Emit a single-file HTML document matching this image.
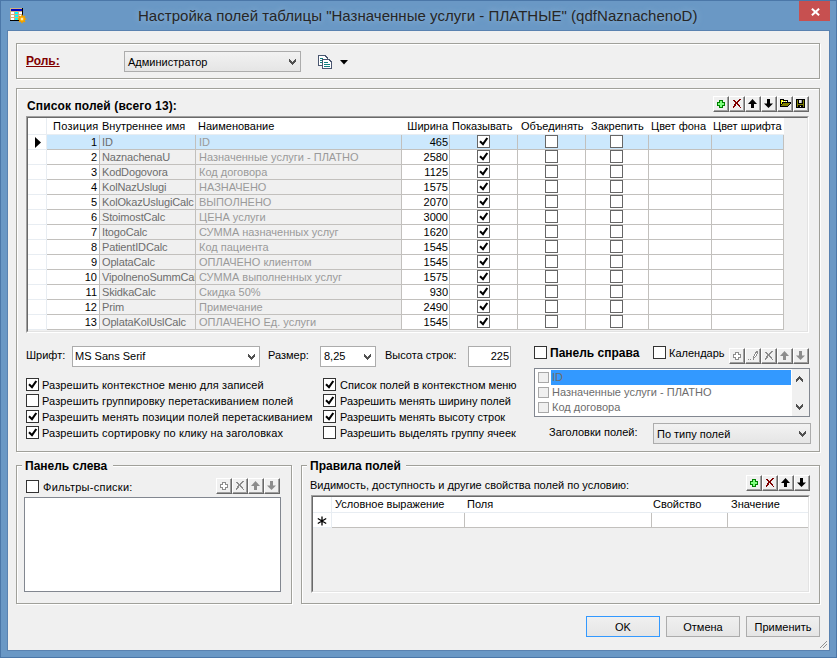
<!DOCTYPE html><html><head><meta charset="utf-8"><style>html,body{margin:0;padding:0;width:837px;height:658px;overflow:hidden;background:#6a98c5;position:relative}</style></head><body>
<div style="position:absolute;left:0px;top:0px;width:837px;height:658px;box-sizing:border-box;border:1px solid #4b77a8;background:#6a98c5"></div>
<div style="position:absolute;left:799px;top:1px;width:31px;height:20px;background:#c75050"></div>
<svg style="position:absolute;left:811px;top:8px" width="9" height="8" viewBox="0 0 9 8" shape-rendering="crispEdges"><path d="M0.9 0.7 L8.1 7.3 M8.1 0.7 L0.9 7.3" stroke="#fff" stroke-width="2" fill="none" shape-rendering="geometricPrecision"/></svg>
<svg style="position:absolute;left:10px;top:8px" width="13" height="13" viewBox="0 0 13 13" shape-rendering="crispEdges"><rect x="0" y="0" width="1" height="1" fill="#d0b080"/><rect x="1" y="0" width="1" height="1" fill="#d0b080"/><rect x="2" y="0" width="1" height="1" fill="#d0b080"/><rect x="3" y="0" width="1" height="1" fill="#d0b080"/><rect x="4" y="0" width="1" height="1" fill="#d0b080"/><rect x="5" y="0" width="1" height="1" fill="#d0b080"/><rect x="6" y="0" width="1" height="1" fill="#d0b080"/><rect x="7" y="0" width="1" height="1" fill="#d0b080"/><rect x="8" y="0" width="1" height="1" fill="#d0b080"/><rect x="9" y="0" width="1" height="1" fill="#d0b080"/><rect x="10" y="0" width="1" height="1" fill="#d0b080"/><rect x="11" y="0" width="1" height="1" fill="#d0b080"/><rect x="12" y="0" width="1" height="1" fill="#000000"/><rect x="0" y="1" width="1" height="1" fill="#d0b080"/><rect x="1" y="1" width="1" height="1" fill="#0000c0"/><rect x="2" y="1" width="1" height="1" fill="#0000c0"/><rect x="3" y="1" width="1" height="1" fill="#0000c0"/><rect x="4" y="1" width="1" height="1" fill="#0000c0"/><rect x="5" y="1" width="1" height="1" fill="#0000c0"/><rect x="6" y="1" width="1" height="1" fill="#0000c0"/><rect x="7" y="1" width="1" height="1" fill="#0000c0"/><rect x="8" y="1" width="1" height="1" fill="#0000c0"/><rect x="9" y="1" width="1" height="1" fill="#0000c0"/><rect x="10" y="1" width="1" height="1" fill="#0000c0"/><rect x="11" y="1" width="1" height="1" fill="#0000c0"/><rect x="12" y="1" width="1" height="1" fill="#000000"/><rect x="0" y="2" width="1" height="1" fill="#d0b080"/><rect x="1" y="2" width="1" height="1" fill="#0000c0"/><rect x="2" y="2" width="1" height="1" fill="#0000c0"/><rect x="3" y="2" width="1" height="1" fill="#0000c0"/><rect x="4" y="2" width="1" height="1" fill="#0000c0"/><rect x="5" y="2" width="1" height="1" fill="#0000c0"/><rect x="6" y="2" width="1" height="1" fill="#0000c0"/><rect x="7" y="2" width="1" height="1" fill="#0000c0"/><rect x="8" y="2" width="1" height="1" fill="#0000c0"/><rect x="9" y="2" width="1" height="1" fill="#0000c0"/><rect x="10" y="2" width="1" height="1" fill="#0000c0"/><rect x="11" y="2" width="1" height="1" fill="#0000c0"/><rect x="12" y="2" width="1" height="1" fill="#000000"/><rect x="0" y="3" width="1" height="1" fill="#d0b080"/><rect x="1" y="3" width="1" height="1" fill="#d0b080"/><rect x="2" y="3" width="1" height="1" fill="#d0b080"/><rect x="3" y="3" width="1" height="1" fill="#d0b080"/><rect x="4" y="3" width="1" height="1" fill="#d0b080"/><rect x="5" y="3" width="1" height="1" fill="#d0b080"/><rect x="6" y="3" width="1" height="1" fill="#d0b080"/><rect x="7" y="3" width="1" height="1" fill="#d0b080"/><rect x="8" y="3" width="1" height="1" fill="#d0b080"/><rect x="9" y="3" width="1" height="1" fill="#d0b080"/><rect x="10" y="3" width="1" height="1" fill="#d0b080"/><rect x="11" y="3" width="1" height="1" fill="#d0b080"/><rect x="12" y="3" width="1" height="1" fill="#000000"/><rect x="0" y="4" width="1" height="1" fill="#d0b080"/><rect x="1" y="4" width="1" height="1" fill="#ffffff"/><rect x="2" y="4" width="1" height="1" fill="#ffffff"/><rect x="3" y="4" width="1" height="1" fill="#ffffff"/><rect x="4" y="4" width="1" height="1" fill="#d0b080"/><rect x="5" y="4" width="1" height="1" fill="#00ffff"/><rect x="6" y="4" width="1" height="1" fill="#00ffff"/><rect x="7" y="4" width="1" height="1" fill="#00ffff"/><rect x="8" y="4" width="1" height="1" fill="#d0b080"/><rect x="9" y="4" width="1" height="1" fill="#ffffff"/><rect x="10" y="4" width="1" height="1" fill="#ffffff"/><rect x="11" y="4" width="1" height="1" fill="#ffffff"/><rect x="12" y="4" width="1" height="1" fill="#000000"/><rect x="0" y="5" width="1" height="1" fill="#d0b080"/><rect x="1" y="5" width="1" height="1" fill="#ffffff"/><rect x="2" y="5" width="1" height="1" fill="#ffffff"/><rect x="3" y="5" width="1" height="1" fill="#ffffff"/><rect x="4" y="5" width="1" height="1" fill="#d0b080"/><rect x="5" y="5" width="1" height="1" fill="#00ffff"/><rect x="6" y="5" width="1" height="1" fill="#00ffff"/><rect x="7" y="5" width="1" height="1" fill="#00ffff"/><rect x="8" y="5" width="1" height="1" fill="#d0b080"/><rect x="9" y="5" width="1" height="1" fill="#ffffff"/><rect x="10" y="5" width="1" height="1" fill="#ffffff"/><rect x="11" y="5" width="1" height="1" fill="#ffffff"/><rect x="12" y="5" width="1" height="1" fill="#000000"/><rect x="0" y="6" width="1" height="1" fill="#d0b080"/><rect x="1" y="6" width="1" height="1" fill="#d0b080"/><rect x="2" y="6" width="1" height="1" fill="#d0b080"/><rect x="3" y="6" width="1" height="1" fill="#d0b080"/><rect x="4" y="6" width="1" height="1" fill="#d0b080"/><rect x="5" y="6" width="1" height="1" fill="#d0b080"/><rect x="6" y="6" width="1" height="1" fill="#d0b080"/><rect x="7" y="6" width="1" height="1" fill="#d0b080"/><rect x="8" y="6" width="1" height="1" fill="#d0b080"/><rect x="9" y="6" width="1" height="1" fill="#d0b080"/><rect x="10" y="6" width="1" height="1" fill="#d0b080"/><rect x="11" y="6" width="1" height="1" fill="#d0b080"/><rect x="12" y="6" width="1" height="1" fill="#000000"/><rect x="0" y="7" width="1" height="1" fill="#d0b080"/><rect x="1" y="7" width="1" height="1" fill="#ffffff"/><rect x="2" y="7" width="1" height="1" fill="#ffffff"/><rect x="3" y="7" width="1" height="1" fill="#ffffff"/><rect x="4" y="7" width="1" height="1" fill="#d0b080"/><rect x="5" y="7" width="1" height="1" fill="#00ffff"/><rect x="6" y="7" width="1" height="1" fill="#00ffff"/><rect x="7" y="7" width="1" height="1" fill="#00ffff"/><rect x="8" y="7" width="1" height="1" fill="#d0b080"/><rect x="9" y="7" width="1" height="1" fill="#ffffff"/><rect x="10" y="7" width="1" height="1" fill="#ffffff"/><rect x="11" y="7" width="1" height="1" fill="#ffffff"/><rect x="12" y="7" width="1" height="1" fill="#000000"/><rect x="0" y="8" width="1" height="1" fill="#d0b080"/><rect x="1" y="8" width="1" height="1" fill="#ffffff"/><rect x="2" y="8" width="1" height="1" fill="#ffffff"/><rect x="3" y="8" width="1" height="1" fill="#ffffff"/><rect x="4" y="8" width="1" height="1" fill="#d0b080"/><rect x="5" y="8" width="1" height="1" fill="#00ffff"/><rect x="6" y="8" width="1" height="1" fill="#00ffff"/><rect x="7" y="8" width="1" height="1" fill="#00ffff"/><rect x="8" y="8" width="1" height="1" fill="#d0b080"/><rect x="9" y="8" width="1" height="1" fill="#ffffff"/><rect x="10" y="8" width="1" height="1" fill="#ffffff"/><rect x="11" y="8" width="1" height="1" fill="#ffffff"/><rect x="12" y="8" width="1" height="1" fill="#000000"/><rect x="0" y="9" width="1" height="1" fill="#d0b080"/><rect x="1" y="9" width="1" height="1" fill="#d0b080"/><rect x="2" y="9" width="1" height="1" fill="#d0b080"/><rect x="3" y="9" width="1" height="1" fill="#d0b080"/><rect x="4" y="9" width="1" height="1" fill="#d0b080"/><rect x="5" y="9" width="1" height="1" fill="#d0b080"/><rect x="6" y="9" width="1" height="1" fill="#d0b080"/><rect x="7" y="9" width="1" height="1" fill="#d0b080"/><rect x="8" y="9" width="1" height="1" fill="#d0b080"/><rect x="9" y="9" width="1" height="1" fill="#d0b080"/><rect x="10" y="9" width="1" height="1" fill="#d0b080"/><rect x="11" y="9" width="1" height="1" fill="#d0b080"/><rect x="12" y="9" width="1" height="1" fill="#000000"/><rect x="0" y="10" width="1" height="1" fill="#d0b080"/><rect x="1" y="10" width="1" height="1" fill="#ffffff"/><rect x="2" y="10" width="1" height="1" fill="#ffffff"/><rect x="3" y="10" width="1" height="1" fill="#ffffff"/><rect x="4" y="10" width="1" height="1" fill="#d0b080"/><rect x="5" y="10" width="1" height="1" fill="#00ffff"/><rect x="6" y="10" width="1" height="1" fill="#00ffff"/><rect x="7" y="10" width="1" height="1" fill="#00ffff"/><rect x="8" y="10" width="1" height="1" fill="#d0b080"/><rect x="9" y="10" width="1" height="1" fill="#ffffff"/><rect x="10" y="10" width="1" height="1" fill="#ffffff"/><rect x="11" y="10" width="1" height="1" fill="#ffffff"/><rect x="12" y="10" width="1" height="1" fill="#000000"/><rect x="0" y="11" width="1" height="1" fill="#d0b080"/><rect x="1" y="11" width="1" height="1" fill="#ffffff"/><rect x="2" y="11" width="1" height="1" fill="#ffffff"/><rect x="3" y="11" width="1" height="1" fill="#ffffff"/><rect x="4" y="11" width="1" height="1" fill="#d0b080"/><rect x="5" y="11" width="1" height="1" fill="#00ffff"/><rect x="6" y="11" width="1" height="1" fill="#00ffff"/><rect x="7" y="11" width="1" height="1" fill="#00ffff"/><rect x="8" y="11" width="1" height="1" fill="#d0b080"/><rect x="9" y="11" width="1" height="1" fill="#ffffff"/><rect x="10" y="11" width="1" height="1" fill="#ffffff"/><rect x="11" y="11" width="1" height="1" fill="#ffffff"/><rect x="12" y="11" width="1" height="1" fill="#000000"/><rect x="0" y="12" width="1" height="1" fill="#000000"/><rect x="1" y="12" width="1" height="1" fill="#000000"/><rect x="2" y="12" width="1" height="1" fill="#000000"/><rect x="3" y="12" width="1" height="1" fill="#000000"/><rect x="4" y="12" width="1" height="1" fill="#000000"/><rect x="5" y="12" width="1" height="1" fill="#000000"/><rect x="6" y="12" width="1" height="1" fill="#000000"/><rect x="7" y="12" width="1" height="1" fill="#000000"/><rect x="8" y="12" width="1" height="1" fill="#000000"/><rect x="9" y="12" width="1" height="1" fill="#000000"/><rect x="10" y="12" width="1" height="1" fill="#000000"/><rect x="11" y="12" width="1" height="1" fill="#000000"/><rect x="12" y="12" width="1" height="1" fill="#000000"/></svg>
<svg style="position:absolute;left:17px;top:14px" width="10" height="10" viewBox="0 0 10 10" shape-rendering="crispEdges"><g shape-rendering="geometricPrecision"><circle cx="5" cy="5" r="3.1" fill="#f0a000"/><path d="M5 0.8 V9.2 M0.8 5 H9.2 M2 2 L8 8 M8 2 L2 8" stroke="#f0a000" stroke-width="1.6"/><circle cx="5" cy="5" r="1.9" fill="#ffc020"/><rect x="4.2" y="4.2" width="1.6" height="1.6" fill="#fff"/></g></svg>
<div style="position:absolute;left:138px;top:8px;font:normal 15px/15px 'Liberation Sans', sans-serif;color:#262626;white-space:nowrap;letter-spacing:0.03px;text-shadow:0 0 6px rgba(190,215,240,0.6)">Настройка полей таблицы "Назначенные услуги - ПЛАТНЫЕ" (qdfNaznachenoD)</div>
<div style="position:absolute;left:7px;top:30px;width:823px;height:621px;box-sizing:border-box;border:1px solid #5a82b0"></div>
<div style="position:absolute;left:8px;top:31px;width:821px;height:619px;background:#f0f0f0"></div>
<div style="position:absolute;left:17px;top:44px;width:804px;height:36px;box-sizing:border-box;border:1px solid #ffffff"></div>
<div style="position:absolute;left:16px;top:43px;width:804px;height:36px;box-sizing:border-box;border:1px solid #a0a09a"></div>
<div style="position:absolute;left:26px;top:55px;font:bold 12px/12px 'Liberation Sans', sans-serif;color:#800000;white-space:nowrap;text-decoration:underline">Роль:</div>
<div style="position:absolute;left:124px;top:51px;width:177px;height:21px;box-sizing:border-box;border:1px solid #acacac;background:linear-gradient(#f2f2f2,#e5e5e5)"></div>
<div style="position:absolute;left:128px;top:57px;font:normal 11px/11px 'Liberation Sans', sans-serif;color:#000;white-space:nowrap;">Администратор</div>
<svg style="position:absolute;left:289px;top:59px" width="7" height="6" viewBox="0 0 7 6" shape-rendering="crispEdges"><rect x="0" y="0" width="1" height="1" fill="#505050"/><rect x="6" y="0" width="1" height="1" fill="#505050"/><rect x="0" y="1" width="1" height="1" fill="#505050"/><rect x="1" y="1" width="1" height="1" fill="#505050"/><rect x="5" y="1" width="1" height="1" fill="#505050"/><rect x="6" y="1" width="1" height="1" fill="#505050"/><rect x="0" y="2" width="1" height="1" fill="#505050"/><rect x="1" y="2" width="1" height="1" fill="#505050"/><rect x="2" y="2" width="1" height="1" fill="#505050"/><rect x="4" y="2" width="1" height="1" fill="#505050"/><rect x="5" y="2" width="1" height="1" fill="#505050"/><rect x="6" y="2" width="1" height="1" fill="#505050"/><rect x="1" y="3" width="1" height="1" fill="#505050"/><rect x="2" y="3" width="1" height="1" fill="#505050"/><rect x="3" y="3" width="1" height="1" fill="#505050"/><rect x="4" y="3" width="1" height="1" fill="#505050"/><rect x="5" y="3" width="1" height="1" fill="#505050"/><rect x="2" y="4" width="1" height="1" fill="#505050"/><rect x="3" y="4" width="1" height="1" fill="#505050"/><rect x="4" y="4" width="1" height="1" fill="#505050"/><rect x="3" y="5" width="1" height="1" fill="#505050"/></svg>
<svg style="position:absolute;left:318px;top:55px" width="15" height="15" viewBox="0 0 15 15" shape-rendering="crispEdges"><g shape-rendering="crispEdges"><path d="M0.5 0.5 H7 L9.5 3 V10.5 H0.5 Z" fill="#fff" stroke="#4a5670"/><path d="M4.5 4.5 H11 L13.5 7 V13.5 H4.5 Z" fill="#fff" stroke="#4a5670"/><rect x="2" y="3" width="3" height="1" fill="#108080"/><rect x="2" y="5" width="2" height="1" fill="#108080"/><rect x="2" y="7" width="2" height="1" fill="#108080"/><rect x="6" y="7" width="4" height="1" fill="#108080"/><rect x="6" y="9" width="6" height="1" fill="#108080"/><rect x="6" y="11" width="6" height="1" fill="#108080"/></g></svg>
<svg style="position:absolute;left:340px;top:60px" width="8" height="5" viewBox="0 0 8 5" shape-rendering="crispEdges"><path d="M0 0 H8 L4 4.5 Z" fill="#000" shape-rendering="geometricPrecision"/></svg>
<div style="position:absolute;left:17px;top:89px;width:804px;height:364px;box-sizing:border-box;border:1px solid #ffffff"></div>
<div style="position:absolute;left:16px;top:88px;width:804px;height:364px;box-sizing:border-box;border:1px solid #a0a09a"></div>
<div style="position:absolute;left:27px;top:100px;font:bold 12px/12px 'Liberation Sans', sans-serif;color:#000;white-space:nowrap;letter-spacing:0.12px">Список полей (всего 13):</div>
<div style="position:absolute;left:713px;top:96px;width:16px;height:16px;box-sizing:border-box;background:#f0f0f0;border-top:1px solid #fff;border-left:1px solid #fff;box-shadow:inset -1px -1px 0 #a0a0a0;border-right:1px solid #696969;border-bottom:1px solid #696969"></div>
<svg style="position:absolute;left:717px;top:100px" width="8" height="8" viewBox="0 0 8 8" shape-rendering="crispEdges"><rect x="2" y="0" width="1" height="1" fill="#008000"/><rect x="3" y="0" width="1" height="1" fill="#008000"/><rect x="4" y="0" width="1" height="1" fill="#008000"/><rect x="5" y="0" width="1" height="1" fill="#008000"/><rect x="2" y="1" width="1" height="1" fill="#008000"/><rect x="3" y="1" width="1" height="1" fill="#80ff80"/><rect x="4" y="1" width="1" height="1" fill="#80ff80"/><rect x="5" y="1" width="1" height="1" fill="#008000"/><rect x="0" y="2" width="1" height="1" fill="#008000"/><rect x="1" y="2" width="1" height="1" fill="#008000"/><rect x="2" y="2" width="1" height="1" fill="#008000"/><rect x="3" y="2" width="1" height="1" fill="#80ff80"/><rect x="4" y="2" width="1" height="1" fill="#80ff80"/><rect x="5" y="2" width="1" height="1" fill="#008000"/><rect x="6" y="2" width="1" height="1" fill="#008000"/><rect x="7" y="2" width="1" height="1" fill="#008000"/><rect x="0" y="3" width="1" height="1" fill="#008000"/><rect x="1" y="3" width="1" height="1" fill="#80ff80"/><rect x="2" y="3" width="1" height="1" fill="#80ff80"/><rect x="3" y="3" width="1" height="1" fill="#80ff80"/><rect x="4" y="3" width="1" height="1" fill="#80ff80"/><rect x="5" y="3" width="1" height="1" fill="#80ff80"/><rect x="6" y="3" width="1" height="1" fill="#80ff80"/><rect x="7" y="3" width="1" height="1" fill="#008000"/><rect x="0" y="4" width="1" height="1" fill="#008000"/><rect x="1" y="4" width="1" height="1" fill="#80ff80"/><rect x="2" y="4" width="1" height="1" fill="#80ff80"/><rect x="3" y="4" width="1" height="1" fill="#80ff80"/><rect x="4" y="4" width="1" height="1" fill="#80ff80"/><rect x="5" y="4" width="1" height="1" fill="#80ff80"/><rect x="6" y="4" width="1" height="1" fill="#80ff80"/><rect x="7" y="4" width="1" height="1" fill="#008000"/><rect x="0" y="5" width="1" height="1" fill="#008000"/><rect x="1" y="5" width="1" height="1" fill="#008000"/><rect x="2" y="5" width="1" height="1" fill="#008000"/><rect x="3" y="5" width="1" height="1" fill="#80ff80"/><rect x="4" y="5" width="1" height="1" fill="#80ff80"/><rect x="5" y="5" width="1" height="1" fill="#008000"/><rect x="6" y="5" width="1" height="1" fill="#008000"/><rect x="7" y="5" width="1" height="1" fill="#008000"/><rect x="2" y="6" width="1" height="1" fill="#008000"/><rect x="3" y="6" width="1" height="1" fill="#80ff80"/><rect x="4" y="6" width="1" height="1" fill="#80ff80"/><rect x="5" y="6" width="1" height="1" fill="#008000"/><rect x="2" y="7" width="1" height="1" fill="#008000"/><rect x="3" y="7" width="1" height="1" fill="#008000"/><rect x="4" y="7" width="1" height="1" fill="#008000"/><rect x="5" y="7" width="1" height="1" fill="#008000"/></svg>
<div style="position:absolute;left:729px;top:96px;width:16px;height:16px;box-sizing:border-box;background:#f0f0f0;border-top:1px solid #fff;border-left:1px solid #fff;box-shadow:inset -1px -1px 0 #a0a0a0;border-right:1px solid #696969;border-bottom:1px solid #696969"></div>
<svg style="position:absolute;left:733px;top:99px" width="8" height="9" viewBox="0 0 8 9" shape-rendering="crispEdges"><rect x="6" y="0" width="1" height="1" fill="#800000"/><rect x="7" y="0" width="1" height="1" fill="#800000"/><rect x="0" y="1" width="1" height="1" fill="#800000"/><rect x="1" y="1" width="1" height="1" fill="#800000"/><rect x="5" y="1" width="1" height="1" fill="#800000"/><rect x="6" y="1" width="1" height="1" fill="#800000"/><rect x="1" y="2" width="1" height="1" fill="#800000"/><rect x="2" y="2" width="1" height="1" fill="#800000"/><rect x="4" y="2" width="1" height="1" fill="#800000"/><rect x="5" y="2" width="1" height="1" fill="#800000"/><rect x="2" y="3" width="1" height="1" fill="#800000"/><rect x="3" y="3" width="1" height="1" fill="#800000"/><rect x="4" y="3" width="1" height="1" fill="#800000"/><rect x="2" y="4" width="1" height="1" fill="#800000"/><rect x="3" y="4" width="1" height="1" fill="#800000"/><rect x="4" y="4" width="1" height="1" fill="#800000"/><rect x="1" y="5" width="1" height="1" fill="#800000"/><rect x="2" y="5" width="1" height="1" fill="#800000"/><rect x="4" y="5" width="1" height="1" fill="#800000"/><rect x="5" y="5" width="1" height="1" fill="#800000"/><rect x="1" y="6" width="1" height="1" fill="#800000"/><rect x="2" y="6" width="1" height="1" fill="#800000"/><rect x="5" y="6" width="1" height="1" fill="#800000"/><rect x="6" y="6" width="1" height="1" fill="#800000"/><rect x="0" y="7" width="1" height="1" fill="#800000"/><rect x="1" y="7" width="1" height="1" fill="#800000"/><rect x="6" y="7" width="1" height="1" fill="#800000"/><rect x="0" y="8" width="1" height="1" fill="#800000"/><rect x="7" y="8" width="1" height="1" fill="#800000"/></svg>
<div style="position:absolute;left:745px;top:96px;width:16px;height:16px;box-sizing:border-box;background:#f0f0f0;border-top:1px solid #fff;border-left:1px solid #fff;box-shadow:inset -1px -1px 0 #a0a0a0;border-right:1px solid #696969;border-bottom:1px solid #696969"></div>
<svg style="position:absolute;left:745px;top:96px" width="16" height="16" viewBox="0 0 16 16" shape-rendering="crispEdges"><path d="M3 8 L7.5 3 L12 8 Z" fill="#000" shape-rendering="geometricPrecision"/><rect x="6" y="8" width="3" height="4" fill="#000"/></svg>
<div style="position:absolute;left:761px;top:96px;width:16px;height:16px;box-sizing:border-box;background:#f0f0f0;border-top:1px solid #fff;border-left:1px solid #fff;box-shadow:inset -1px -1px 0 #a0a0a0;border-right:1px solid #696969;border-bottom:1px solid #696969"></div>
<svg style="position:absolute;left:761px;top:96px" width="16" height="16" viewBox="0 0 16 16" shape-rendering="crispEdges"><rect x="6" y="3" width="3" height="5" fill="#000"/><path d="M3 7.5 L12 7.5 L7.5 12 Z" fill="#000" shape-rendering="geometricPrecision"/></svg>
<div style="position:absolute;left:777px;top:96px;width:16px;height:16px;box-sizing:border-box;background:#f0f0f0;border-top:1px solid #fff;border-left:1px solid #fff;box-shadow:inset -1px -1px 0 #a0a0a0;border-right:1px solid #696969;border-bottom:1px solid #696969"></div>
<svg style="position:absolute;left:780px;top:99px" width="11" height="8" viewBox="0 0 11 8" shape-rendering="crispEdges"><rect x="0" y="0" width="1" height="1" fill="#000"/><rect x="1" y="0" width="1" height="1" fill="#000"/><rect x="2" y="0" width="1" height="1" fill="#000"/><rect x="3" y="0" width="1" height="1" fill="#000"/><rect x="0" y="1" width="1" height="1" fill="#000"/><rect x="1" y="1" width="1" height="1" fill="#ffff00"/><rect x="2" y="1" width="1" height="1" fill="#ffff00"/><rect x="3" y="1" width="1" height="1" fill="#000"/><rect x="4" y="1" width="1" height="1" fill="#000"/><rect x="5" y="1" width="1" height="1" fill="#000"/><rect x="6" y="1" width="1" height="1" fill="#000"/><rect x="7" y="1" width="1" height="1" fill="#000"/><rect x="0" y="2" width="1" height="1" fill="#000"/><rect x="1" y="2" width="1" height="1" fill="#ffff00"/><rect x="2" y="2" width="1" height="1" fill="#ffffff"/><rect x="3" y="2" width="1" height="1" fill="#ffff00"/><rect x="4" y="2" width="1" height="1" fill="#ffffff"/><rect x="5" y="2" width="1" height="1" fill="#ffff00"/><rect x="6" y="2" width="1" height="1" fill="#ffffff"/><rect x="7" y="2" width="1" height="1" fill="#000"/><rect x="0" y="3" width="1" height="1" fill="#000"/><rect x="1" y="3" width="1" height="1" fill="#ffff00"/><rect x="2" y="3" width="1" height="1" fill="#000"/><rect x="3" y="3" width="1" height="1" fill="#000"/><rect x="4" y="3" width="1" height="1" fill="#000"/><rect x="5" y="3" width="1" height="1" fill="#000"/><rect x="6" y="3" width="1" height="1" fill="#000"/><rect x="7" y="3" width="1" height="1" fill="#000"/><rect x="8" y="3" width="1" height="1" fill="#000"/><rect x="9" y="3" width="1" height="1" fill="#000"/><rect x="10" y="3" width="1" height="1" fill="#000"/><rect x="0" y="4" width="1" height="1" fill="#000"/><rect x="1" y="4" width="1" height="1" fill="#ffff00"/><rect x="2" y="4" width="1" height="1" fill="#000"/><rect x="3" y="4" width="1" height="1" fill="#808000"/><rect x="4" y="4" width="1" height="1" fill="#808000"/><rect x="5" y="4" width="1" height="1" fill="#808000"/><rect x="6" y="4" width="1" height="1" fill="#808000"/><rect x="7" y="4" width="1" height="1" fill="#808000"/><rect x="8" y="4" width="1" height="1" fill="#808000"/><rect x="9" y="4" width="1" height="1" fill="#808000"/><rect x="10" y="4" width="1" height="1" fill="#000"/><rect x="0" y="5" width="1" height="1" fill="#000"/><rect x="1" y="5" width="1" height="1" fill="#000"/><rect x="2" y="5" width="1" height="1" fill="#808000"/><rect x="3" y="5" width="1" height="1" fill="#808000"/><rect x="4" y="5" width="1" height="1" fill="#808000"/><rect x="5" y="5" width="1" height="1" fill="#808000"/><rect x="6" y="5" width="1" height="1" fill="#808000"/><rect x="7" y="5" width="1" height="1" fill="#808000"/><rect x="8" y="5" width="1" height="1" fill="#808000"/><rect x="9" y="5" width="1" height="1" fill="#000"/><rect x="0" y="6" width="1" height="1" fill="#000"/><rect x="1" y="6" width="1" height="1" fill="#808000"/><rect x="2" y="6" width="1" height="1" fill="#808000"/><rect x="3" y="6" width="1" height="1" fill="#808000"/><rect x="4" y="6" width="1" height="1" fill="#808000"/><rect x="5" y="6" width="1" height="1" fill="#808000"/><rect x="6" y="6" width="1" height="1" fill="#808000"/><rect x="7" y="6" width="1" height="1" fill="#808000"/><rect x="8" y="6" width="1" height="1" fill="#000"/><rect x="0" y="7" width="1" height="1" fill="#000"/><rect x="1" y="7" width="1" height="1" fill="#000"/><rect x="2" y="7" width="1" height="1" fill="#000"/><rect x="3" y="7" width="1" height="1" fill="#000"/><rect x="4" y="7" width="1" height="1" fill="#000"/><rect x="5" y="7" width="1" height="1" fill="#000"/><rect x="6" y="7" width="1" height="1" fill="#000"/><rect x="7" y="7" width="1" height="1" fill="#000"/></svg>
<div style="position:absolute;left:793px;top:96px;width:16px;height:16px;box-sizing:border-box;background:#f0f0f0;border-top:1px solid #fff;border-left:1px solid #fff;box-shadow:inset -1px -1px 0 #a0a0a0;border-right:1px solid #696969;border-bottom:1px solid #696969"></div>
<svg style="position:absolute;left:796px;top:99px" width="9" height="9" viewBox="0 0 9 9" shape-rendering="crispEdges"><rect x="0" y="0" width="1" height="1" fill="#000"/><rect x="1" y="0" width="1" height="1" fill="#000"/><rect x="2" y="0" width="1" height="1" fill="#000"/><rect x="3" y="0" width="1" height="1" fill="#000"/><rect x="4" y="0" width="1" height="1" fill="#000"/><rect x="5" y="0" width="1" height="1" fill="#000"/><rect x="6" y="0" width="1" height="1" fill="#000"/><rect x="7" y="0" width="1" height="1" fill="#000"/><rect x="8" y="0" width="1" height="1" fill="#000"/><rect x="0" y="1" width="1" height="1" fill="#000"/><rect x="1" y="1" width="1" height="1" fill="#808000"/><rect x="2" y="1" width="1" height="1" fill="#000"/><rect x="3" y="1" width="1" height="1" fill="#e0e0e0"/><rect x="4" y="1" width="1" height="1" fill="#e0e0e0"/><rect x="5" y="1" width="1" height="1" fill="#a0a0a0"/><rect x="6" y="1" width="1" height="1" fill="#000"/><rect x="7" y="1" width="1" height="1" fill="#808000"/><rect x="8" y="1" width="1" height="1" fill="#000"/><rect x="0" y="2" width="1" height="1" fill="#000"/><rect x="1" y="2" width="1" height="1" fill="#808000"/><rect x="2" y="2" width="1" height="1" fill="#000"/><rect x="3" y="2" width="1" height="1" fill="#e0e0e0"/><rect x="4" y="2" width="1" height="1" fill="#e0e0e0"/><rect x="5" y="2" width="1" height="1" fill="#a0a0a0"/><rect x="6" y="2" width="1" height="1" fill="#000"/><rect x="7" y="2" width="1" height="1" fill="#808000"/><rect x="8" y="2" width="1" height="1" fill="#000"/><rect x="0" y="3" width="1" height="1" fill="#000"/><rect x="1" y="3" width="1" height="1" fill="#808000"/><rect x="2" y="3" width="1" height="1" fill="#000"/><rect x="3" y="3" width="1" height="1" fill="#e0e0e0"/><rect x="4" y="3" width="1" height="1" fill="#e0e0e0"/><rect x="5" y="3" width="1" height="1" fill="#a0a0a0"/><rect x="6" y="3" width="1" height="1" fill="#000"/><rect x="7" y="3" width="1" height="1" fill="#808000"/><rect x="8" y="3" width="1" height="1" fill="#000"/><rect x="0" y="4" width="1" height="1" fill="#000"/><rect x="1" y="4" width="1" height="1" fill="#808000"/><rect x="2" y="4" width="1" height="1" fill="#000"/><rect x="3" y="4" width="1" height="1" fill="#000"/><rect x="4" y="4" width="1" height="1" fill="#000"/><rect x="5" y="4" width="1" height="1" fill="#000"/><rect x="6" y="4" width="1" height="1" fill="#000"/><rect x="7" y="4" width="1" height="1" fill="#808000"/><rect x="8" y="4" width="1" height="1" fill="#000"/><rect x="0" y="5" width="1" height="1" fill="#000"/><rect x="1" y="5" width="1" height="1" fill="#808000"/><rect x="2" y="5" width="1" height="1" fill="#808000"/><rect x="3" y="5" width="1" height="1" fill="#808000"/><rect x="4" y="5" width="1" height="1" fill="#808000"/><rect x="5" y="5" width="1" height="1" fill="#808000"/><rect x="6" y="5" width="1" height="1" fill="#808000"/><rect x="7" y="5" width="1" height="1" fill="#808000"/><rect x="8" y="5" width="1" height="1" fill="#000"/><rect x="0" y="6" width="1" height="1" fill="#000"/><rect x="1" y="6" width="1" height="1" fill="#808000"/><rect x="2" y="6" width="1" height="1" fill="#000"/><rect x="3" y="6" width="1" height="1" fill="#000"/><rect x="4" y="6" width="1" height="1" fill="#000"/><rect x="5" y="6" width="1" height="1" fill="#000"/><rect x="6" y="6" width="1" height="1" fill="#000"/><rect x="7" y="6" width="1" height="1" fill="#808000"/><rect x="8" y="6" width="1" height="1" fill="#000"/><rect x="0" y="7" width="1" height="1" fill="#000"/><rect x="1" y="7" width="1" height="1" fill="#808000"/><rect x="2" y="7" width="1" height="1" fill="#000"/><rect x="3" y="7" width="1" height="1" fill="#000"/><rect x="4" y="7" width="1" height="1" fill="#e0e0e0"/><rect x="5" y="7" width="1" height="1" fill="#000"/><rect x="6" y="7" width="1" height="1" fill="#000"/><rect x="7" y="7" width="1" height="1" fill="#808000"/><rect x="8" y="7" width="1" height="1" fill="#000"/><rect x="0" y="8" width="1" height="1" fill="#000"/><rect x="1" y="8" width="1" height="1" fill="#000"/><rect x="2" y="8" width="1" height="1" fill="#000"/><rect x="3" y="8" width="1" height="1" fill="#000"/><rect x="4" y="8" width="1" height="1" fill="#000"/><rect x="5" y="8" width="1" height="1" fill="#000"/><rect x="6" y="8" width="1" height="1" fill="#000"/><rect x="7" y="8" width="1" height="1" fill="#000"/><rect x="8" y="8" width="1" height="1" fill="#000"/></svg>
<div style="position:absolute;left:26px;top:116px;width:783px;height:217px;box-sizing:border-box;background:#f0f0f0;border-top:1px solid #a0a0a0;border-left:1px solid #a0a0a0;border-right:1px solid #fff;border-bottom:1px solid #fff"></div>
<div style="position:absolute;left:27px;top:117px;width:781px;height:215px;box-sizing:border-box;border-top:1px solid #696969;border-left:1px solid #696969;border-right:1px solid #e3e3e3;border-bottom:1px solid #e3e3e3"></div>
<div style="position:absolute;left:28px;top:118px;width:756px;height:17px;background:#ffffff"></div>
<div style="position:absolute;left:28px;top:134px;width:756px;height:1px;background:#e8edf2"></div>
<div style="position:absolute;left:28px;top:135px;width:18px;height:14px;background:#ffffff"></div>
<div style="position:absolute;left:28px;top:149px;width:18px;height:1px;background:#e8edf2"></div>
<div style="position:absolute;left:47px;top:135px;width:52px;height:14px;background:#cce8fd"></div>
<div style="position:absolute;left:100px;top:135px;width:95px;height:14px;background:#cce8fd"></div>
<div style="position:absolute;left:196px;top:135px;width:205px;height:14px;background:#cce8fd"></div>
<div style="position:absolute;left:402px;top:135px;width:381px;height:14px;background:#cce8fd"></div>
<div style="position:absolute;left:47px;top:149px;width:737px;height:1px;background:#c2c0bd"></div>
<div style="position:absolute;left:-303px;width:400px;text-align:right;top:137px;font:normal 11px/11px 'Liberation Sans', sans-serif;color:#000;white-space:nowrap;">1</div>
<div style="position:absolute;left:102px;top:137px;width:93px;overflow:hidden;font:normal 11px/11px 'Liberation Sans', sans-serif;color:#6d6d6d;white-space:nowrap;letter-spacing:-0.15px">ID</div>
<div style="position:absolute;left:199px;top:137px;width:202px;overflow:hidden;font:normal 11px/11px 'Liberation Sans', sans-serif;color:#9a9a9a;white-space:nowrap;">ID</div>
<div style="position:absolute;left:48px;width:400px;text-align:right;top:137px;font:normal 11px/11px 'Liberation Sans', sans-serif;color:#000;white-space:nowrap;">465</div>
<div style="position:absolute;left:477px;top:135px;width:13px;height:13px;box-sizing:border-box;border:1px solid #666;background:#ffffff"></div>
<svg style="position:absolute;left:477px;top:135px" width="13" height="13" viewBox="0 0 13 13"><path d="M3 6.3 L6 9.2 L10.3 3" fill="none" stroke="#000" stroke-width="2.1" stroke-linecap="butt" stroke-linejoin="miter"/></svg>
<div style="position:absolute;left:545px;top:135px;width:13px;height:13px;box-sizing:border-box;border:1px solid #666;background:#ffffff"></div>
<div style="position:absolute;left:610px;top:135px;width:13px;height:13px;box-sizing:border-box;border:1px solid #666;background:#ffffff"></div>
<div style="position:absolute;left:28px;top:150px;width:18px;height:14px;background:#ffffff"></div>
<div style="position:absolute;left:28px;top:164px;width:18px;height:1px;background:#e8edf2"></div>
<div style="position:absolute;left:47px;top:150px;width:52px;height:14px;background:#ffffff"></div>
<div style="position:absolute;left:100px;top:150px;width:95px;height:14px;background:#f0f0f0"></div>
<div style="position:absolute;left:196px;top:150px;width:205px;height:14px;background:#f0f0f0"></div>
<div style="position:absolute;left:402px;top:150px;width:381px;height:14px;background:#ffffff"></div>
<div style="position:absolute;left:47px;top:164px;width:737px;height:1px;background:#c2c0bd"></div>
<div style="position:absolute;left:-303px;width:400px;text-align:right;top:152px;font:normal 11px/11px 'Liberation Sans', sans-serif;color:#000;white-space:nowrap;">2</div>
<div style="position:absolute;left:102px;top:152px;width:93px;overflow:hidden;font:normal 11px/11px 'Liberation Sans', sans-serif;color:#6d6d6d;white-space:nowrap;letter-spacing:-0.15px">NaznachenaU</div>
<div style="position:absolute;left:199px;top:152px;width:202px;overflow:hidden;font:normal 11px/11px 'Liberation Sans', sans-serif;color:#9a9a9a;white-space:nowrap;">Назначенные услуги - ПЛАТНО</div>
<div style="position:absolute;left:48px;width:400px;text-align:right;top:152px;font:normal 11px/11px 'Liberation Sans', sans-serif;color:#000;white-space:nowrap;">2580</div>
<div style="position:absolute;left:477px;top:150px;width:13px;height:13px;box-sizing:border-box;border:1px solid #666;background:#ffffff"></div>
<svg style="position:absolute;left:477px;top:150px" width="13" height="13" viewBox="0 0 13 13"><path d="M3 6.3 L6 9.2 L10.3 3" fill="none" stroke="#000" stroke-width="2.1" stroke-linecap="butt" stroke-linejoin="miter"/></svg>
<div style="position:absolute;left:545px;top:150px;width:13px;height:13px;box-sizing:border-box;border:1px solid #666;background:#ffffff"></div>
<div style="position:absolute;left:610px;top:150px;width:13px;height:13px;box-sizing:border-box;border:1px solid #666;background:#ffffff"></div>
<div style="position:absolute;left:28px;top:165px;width:18px;height:14px;background:#ffffff"></div>
<div style="position:absolute;left:28px;top:179px;width:18px;height:1px;background:#e8edf2"></div>
<div style="position:absolute;left:47px;top:165px;width:52px;height:14px;background:#ffffff"></div>
<div style="position:absolute;left:100px;top:165px;width:95px;height:14px;background:#f0f0f0"></div>
<div style="position:absolute;left:196px;top:165px;width:205px;height:14px;background:#f0f0f0"></div>
<div style="position:absolute;left:402px;top:165px;width:381px;height:14px;background:#ffffff"></div>
<div style="position:absolute;left:47px;top:179px;width:737px;height:1px;background:#c2c0bd"></div>
<div style="position:absolute;left:-303px;width:400px;text-align:right;top:167px;font:normal 11px/11px 'Liberation Sans', sans-serif;color:#000;white-space:nowrap;">3</div>
<div style="position:absolute;left:102px;top:167px;width:93px;overflow:hidden;font:normal 11px/11px 'Liberation Sans', sans-serif;color:#6d6d6d;white-space:nowrap;letter-spacing:-0.15px">KodDogovora</div>
<div style="position:absolute;left:199px;top:167px;width:202px;overflow:hidden;font:normal 11px/11px 'Liberation Sans', sans-serif;color:#9a9a9a;white-space:nowrap;">Код договора</div>
<div style="position:absolute;left:48px;width:400px;text-align:right;top:167px;font:normal 11px/11px 'Liberation Sans', sans-serif;color:#000;white-space:nowrap;">1125</div>
<div style="position:absolute;left:477px;top:165px;width:13px;height:13px;box-sizing:border-box;border:1px solid #666;background:#ffffff"></div>
<svg style="position:absolute;left:477px;top:165px" width="13" height="13" viewBox="0 0 13 13"><path d="M3 6.3 L6 9.2 L10.3 3" fill="none" stroke="#000" stroke-width="2.1" stroke-linecap="butt" stroke-linejoin="miter"/></svg>
<div style="position:absolute;left:545px;top:165px;width:13px;height:13px;box-sizing:border-box;border:1px solid #666;background:#ffffff"></div>
<div style="position:absolute;left:610px;top:165px;width:13px;height:13px;box-sizing:border-box;border:1px solid #666;background:#ffffff"></div>
<div style="position:absolute;left:28px;top:180px;width:18px;height:14px;background:#ffffff"></div>
<div style="position:absolute;left:28px;top:194px;width:18px;height:1px;background:#e8edf2"></div>
<div style="position:absolute;left:47px;top:180px;width:52px;height:14px;background:#ffffff"></div>
<div style="position:absolute;left:100px;top:180px;width:95px;height:14px;background:#f0f0f0"></div>
<div style="position:absolute;left:196px;top:180px;width:205px;height:14px;background:#f0f0f0"></div>
<div style="position:absolute;left:402px;top:180px;width:381px;height:14px;background:#ffffff"></div>
<div style="position:absolute;left:47px;top:194px;width:737px;height:1px;background:#c2c0bd"></div>
<div style="position:absolute;left:-303px;width:400px;text-align:right;top:182px;font:normal 11px/11px 'Liberation Sans', sans-serif;color:#000;white-space:nowrap;">4</div>
<div style="position:absolute;left:102px;top:182px;width:93px;overflow:hidden;font:normal 11px/11px 'Liberation Sans', sans-serif;color:#6d6d6d;white-space:nowrap;letter-spacing:-0.15px">KolNazUslugi</div>
<div style="position:absolute;left:199px;top:182px;width:202px;overflow:hidden;font:normal 11px/11px 'Liberation Sans', sans-serif;color:#9a9a9a;white-space:nowrap;">НАЗНАЧЕНО</div>
<div style="position:absolute;left:48px;width:400px;text-align:right;top:182px;font:normal 11px/11px 'Liberation Sans', sans-serif;color:#000;white-space:nowrap;">1575</div>
<div style="position:absolute;left:477px;top:180px;width:13px;height:13px;box-sizing:border-box;border:1px solid #666;background:#ffffff"></div>
<svg style="position:absolute;left:477px;top:180px" width="13" height="13" viewBox="0 0 13 13"><path d="M3 6.3 L6 9.2 L10.3 3" fill="none" stroke="#000" stroke-width="2.1" stroke-linecap="butt" stroke-linejoin="miter"/></svg>
<div style="position:absolute;left:545px;top:180px;width:13px;height:13px;box-sizing:border-box;border:1px solid #666;background:#ffffff"></div>
<div style="position:absolute;left:610px;top:180px;width:13px;height:13px;box-sizing:border-box;border:1px solid #666;background:#ffffff"></div>
<div style="position:absolute;left:28px;top:195px;width:18px;height:14px;background:#ffffff"></div>
<div style="position:absolute;left:28px;top:209px;width:18px;height:1px;background:#e8edf2"></div>
<div style="position:absolute;left:47px;top:195px;width:52px;height:14px;background:#ffffff"></div>
<div style="position:absolute;left:100px;top:195px;width:95px;height:14px;background:#f0f0f0"></div>
<div style="position:absolute;left:196px;top:195px;width:205px;height:14px;background:#f0f0f0"></div>
<div style="position:absolute;left:402px;top:195px;width:381px;height:14px;background:#ffffff"></div>
<div style="position:absolute;left:47px;top:209px;width:737px;height:1px;background:#c2c0bd"></div>
<div style="position:absolute;left:-303px;width:400px;text-align:right;top:197px;font:normal 11px/11px 'Liberation Sans', sans-serif;color:#000;white-space:nowrap;">5</div>
<div style="position:absolute;left:102px;top:197px;width:93px;overflow:hidden;font:normal 11px/11px 'Liberation Sans', sans-serif;color:#6d6d6d;white-space:nowrap;letter-spacing:-0.15px">KolOkazUslugiCalc</div>
<div style="position:absolute;left:199px;top:197px;width:202px;overflow:hidden;font:normal 11px/11px 'Liberation Sans', sans-serif;color:#9a9a9a;white-space:nowrap;">ВЫПОЛНЕНО</div>
<div style="position:absolute;left:48px;width:400px;text-align:right;top:197px;font:normal 11px/11px 'Liberation Sans', sans-serif;color:#000;white-space:nowrap;">2070</div>
<div style="position:absolute;left:477px;top:195px;width:13px;height:13px;box-sizing:border-box;border:1px solid #666;background:#ffffff"></div>
<svg style="position:absolute;left:477px;top:195px" width="13" height="13" viewBox="0 0 13 13"><path d="M3 6.3 L6 9.2 L10.3 3" fill="none" stroke="#000" stroke-width="2.1" stroke-linecap="butt" stroke-linejoin="miter"/></svg>
<div style="position:absolute;left:545px;top:195px;width:13px;height:13px;box-sizing:border-box;border:1px solid #666;background:#ffffff"></div>
<div style="position:absolute;left:610px;top:195px;width:13px;height:13px;box-sizing:border-box;border:1px solid #666;background:#ffffff"></div>
<div style="position:absolute;left:28px;top:210px;width:18px;height:14px;background:#ffffff"></div>
<div style="position:absolute;left:28px;top:224px;width:18px;height:1px;background:#e8edf2"></div>
<div style="position:absolute;left:47px;top:210px;width:52px;height:14px;background:#ffffff"></div>
<div style="position:absolute;left:100px;top:210px;width:95px;height:14px;background:#f0f0f0"></div>
<div style="position:absolute;left:196px;top:210px;width:205px;height:14px;background:#f0f0f0"></div>
<div style="position:absolute;left:402px;top:210px;width:381px;height:14px;background:#ffffff"></div>
<div style="position:absolute;left:47px;top:224px;width:737px;height:1px;background:#c2c0bd"></div>
<div style="position:absolute;left:-303px;width:400px;text-align:right;top:212px;font:normal 11px/11px 'Liberation Sans', sans-serif;color:#000;white-space:nowrap;">6</div>
<div style="position:absolute;left:102px;top:212px;width:93px;overflow:hidden;font:normal 11px/11px 'Liberation Sans', sans-serif;color:#6d6d6d;white-space:nowrap;letter-spacing:-0.15px">StoimostCalc</div>
<div style="position:absolute;left:199px;top:212px;width:202px;overflow:hidden;font:normal 11px/11px 'Liberation Sans', sans-serif;color:#9a9a9a;white-space:nowrap;">ЦЕНА услуги</div>
<div style="position:absolute;left:48px;width:400px;text-align:right;top:212px;font:normal 11px/11px 'Liberation Sans', sans-serif;color:#000;white-space:nowrap;">3000</div>
<div style="position:absolute;left:477px;top:210px;width:13px;height:13px;box-sizing:border-box;border:1px solid #666;background:#ffffff"></div>
<svg style="position:absolute;left:477px;top:210px" width="13" height="13" viewBox="0 0 13 13"><path d="M3 6.3 L6 9.2 L10.3 3" fill="none" stroke="#000" stroke-width="2.1" stroke-linecap="butt" stroke-linejoin="miter"/></svg>
<div style="position:absolute;left:545px;top:210px;width:13px;height:13px;box-sizing:border-box;border:1px solid #666;background:#ffffff"></div>
<div style="position:absolute;left:610px;top:210px;width:13px;height:13px;box-sizing:border-box;border:1px solid #666;background:#ffffff"></div>
<div style="position:absolute;left:28px;top:225px;width:18px;height:14px;background:#ffffff"></div>
<div style="position:absolute;left:28px;top:239px;width:18px;height:1px;background:#e8edf2"></div>
<div style="position:absolute;left:47px;top:225px;width:52px;height:14px;background:#ffffff"></div>
<div style="position:absolute;left:100px;top:225px;width:95px;height:14px;background:#f0f0f0"></div>
<div style="position:absolute;left:196px;top:225px;width:205px;height:14px;background:#f0f0f0"></div>
<div style="position:absolute;left:402px;top:225px;width:381px;height:14px;background:#ffffff"></div>
<div style="position:absolute;left:47px;top:239px;width:737px;height:1px;background:#c2c0bd"></div>
<div style="position:absolute;left:-303px;width:400px;text-align:right;top:227px;font:normal 11px/11px 'Liberation Sans', sans-serif;color:#000;white-space:nowrap;">7</div>
<div style="position:absolute;left:102px;top:227px;width:93px;overflow:hidden;font:normal 11px/11px 'Liberation Sans', sans-serif;color:#6d6d6d;white-space:nowrap;letter-spacing:-0.15px">ItogoCalc</div>
<div style="position:absolute;left:199px;top:227px;width:202px;overflow:hidden;font:normal 11px/11px 'Liberation Sans', sans-serif;color:#9a9a9a;white-space:nowrap;">СУММА назначенных услуг</div>
<div style="position:absolute;left:48px;width:400px;text-align:right;top:227px;font:normal 11px/11px 'Liberation Sans', sans-serif;color:#000;white-space:nowrap;">1620</div>
<div style="position:absolute;left:477px;top:225px;width:13px;height:13px;box-sizing:border-box;border:1px solid #666;background:#ffffff"></div>
<svg style="position:absolute;left:477px;top:225px" width="13" height="13" viewBox="0 0 13 13"><path d="M3 6.3 L6 9.2 L10.3 3" fill="none" stroke="#000" stroke-width="2.1" stroke-linecap="butt" stroke-linejoin="miter"/></svg>
<div style="position:absolute;left:545px;top:225px;width:13px;height:13px;box-sizing:border-box;border:1px solid #666;background:#ffffff"></div>
<div style="position:absolute;left:610px;top:225px;width:13px;height:13px;box-sizing:border-box;border:1px solid #666;background:#ffffff"></div>
<div style="position:absolute;left:28px;top:240px;width:18px;height:14px;background:#ffffff"></div>
<div style="position:absolute;left:28px;top:254px;width:18px;height:1px;background:#e8edf2"></div>
<div style="position:absolute;left:47px;top:240px;width:52px;height:14px;background:#ffffff"></div>
<div style="position:absolute;left:100px;top:240px;width:95px;height:14px;background:#f0f0f0"></div>
<div style="position:absolute;left:196px;top:240px;width:205px;height:14px;background:#f0f0f0"></div>
<div style="position:absolute;left:402px;top:240px;width:381px;height:14px;background:#ffffff"></div>
<div style="position:absolute;left:47px;top:254px;width:737px;height:1px;background:#c2c0bd"></div>
<div style="position:absolute;left:-303px;width:400px;text-align:right;top:242px;font:normal 11px/11px 'Liberation Sans', sans-serif;color:#000;white-space:nowrap;">8</div>
<div style="position:absolute;left:102px;top:242px;width:93px;overflow:hidden;font:normal 11px/11px 'Liberation Sans', sans-serif;color:#6d6d6d;white-space:nowrap;letter-spacing:-0.15px">PatientIDCalc</div>
<div style="position:absolute;left:199px;top:242px;width:202px;overflow:hidden;font:normal 11px/11px 'Liberation Sans', sans-serif;color:#9a9a9a;white-space:nowrap;">Код пациента</div>
<div style="position:absolute;left:48px;width:400px;text-align:right;top:242px;font:normal 11px/11px 'Liberation Sans', sans-serif;color:#000;white-space:nowrap;">1545</div>
<div style="position:absolute;left:477px;top:240px;width:13px;height:13px;box-sizing:border-box;border:1px solid #666;background:#ffffff"></div>
<svg style="position:absolute;left:477px;top:240px" width="13" height="13" viewBox="0 0 13 13"><path d="M3 6.3 L6 9.2 L10.3 3" fill="none" stroke="#000" stroke-width="2.1" stroke-linecap="butt" stroke-linejoin="miter"/></svg>
<div style="position:absolute;left:545px;top:240px;width:13px;height:13px;box-sizing:border-box;border:1px solid #666;background:#ffffff"></div>
<div style="position:absolute;left:610px;top:240px;width:13px;height:13px;box-sizing:border-box;border:1px solid #666;background:#ffffff"></div>
<div style="position:absolute;left:28px;top:255px;width:18px;height:14px;background:#ffffff"></div>
<div style="position:absolute;left:28px;top:269px;width:18px;height:1px;background:#e8edf2"></div>
<div style="position:absolute;left:47px;top:255px;width:52px;height:14px;background:#ffffff"></div>
<div style="position:absolute;left:100px;top:255px;width:95px;height:14px;background:#f0f0f0"></div>
<div style="position:absolute;left:196px;top:255px;width:205px;height:14px;background:#f0f0f0"></div>
<div style="position:absolute;left:402px;top:255px;width:381px;height:14px;background:#ffffff"></div>
<div style="position:absolute;left:47px;top:269px;width:737px;height:1px;background:#c2c0bd"></div>
<div style="position:absolute;left:-303px;width:400px;text-align:right;top:257px;font:normal 11px/11px 'Liberation Sans', sans-serif;color:#000;white-space:nowrap;">9</div>
<div style="position:absolute;left:102px;top:257px;width:93px;overflow:hidden;font:normal 11px/11px 'Liberation Sans', sans-serif;color:#6d6d6d;white-space:nowrap;letter-spacing:-0.15px">OplataCalc</div>
<div style="position:absolute;left:199px;top:257px;width:202px;overflow:hidden;font:normal 11px/11px 'Liberation Sans', sans-serif;color:#9a9a9a;white-space:nowrap;">ОПЛАЧЕНО клиентом</div>
<div style="position:absolute;left:48px;width:400px;text-align:right;top:257px;font:normal 11px/11px 'Liberation Sans', sans-serif;color:#000;white-space:nowrap;">1545</div>
<div style="position:absolute;left:477px;top:255px;width:13px;height:13px;box-sizing:border-box;border:1px solid #666;background:#ffffff"></div>
<svg style="position:absolute;left:477px;top:255px" width="13" height="13" viewBox="0 0 13 13"><path d="M3 6.3 L6 9.2 L10.3 3" fill="none" stroke="#000" stroke-width="2.1" stroke-linecap="butt" stroke-linejoin="miter"/></svg>
<div style="position:absolute;left:545px;top:255px;width:13px;height:13px;box-sizing:border-box;border:1px solid #666;background:#ffffff"></div>
<div style="position:absolute;left:610px;top:255px;width:13px;height:13px;box-sizing:border-box;border:1px solid #666;background:#ffffff"></div>
<div style="position:absolute;left:28px;top:270px;width:18px;height:14px;background:#ffffff"></div>
<div style="position:absolute;left:28px;top:284px;width:18px;height:1px;background:#e8edf2"></div>
<div style="position:absolute;left:47px;top:270px;width:52px;height:14px;background:#ffffff"></div>
<div style="position:absolute;left:100px;top:270px;width:95px;height:14px;background:#f0f0f0"></div>
<div style="position:absolute;left:196px;top:270px;width:205px;height:14px;background:#f0f0f0"></div>
<div style="position:absolute;left:402px;top:270px;width:381px;height:14px;background:#ffffff"></div>
<div style="position:absolute;left:47px;top:284px;width:737px;height:1px;background:#c2c0bd"></div>
<div style="position:absolute;left:-303px;width:400px;text-align:right;top:272px;font:normal 11px/11px 'Liberation Sans', sans-serif;color:#000;white-space:nowrap;">10</div>
<div style="position:absolute;left:102px;top:272px;width:93px;overflow:hidden;font:normal 11px/11px 'Liberation Sans', sans-serif;color:#6d6d6d;white-space:nowrap;letter-spacing:-0.15px">VipolnenoSummCalc</div>
<div style="position:absolute;left:199px;top:272px;width:202px;overflow:hidden;font:normal 11px/11px 'Liberation Sans', sans-serif;color:#9a9a9a;white-space:nowrap;">СУММА выполненных услуг</div>
<div style="position:absolute;left:48px;width:400px;text-align:right;top:272px;font:normal 11px/11px 'Liberation Sans', sans-serif;color:#000;white-space:nowrap;">1575</div>
<div style="position:absolute;left:477px;top:270px;width:13px;height:13px;box-sizing:border-box;border:1px solid #666;background:#ffffff"></div>
<svg style="position:absolute;left:477px;top:270px" width="13" height="13" viewBox="0 0 13 13"><path d="M3 6.3 L6 9.2 L10.3 3" fill="none" stroke="#000" stroke-width="2.1" stroke-linecap="butt" stroke-linejoin="miter"/></svg>
<div style="position:absolute;left:545px;top:270px;width:13px;height:13px;box-sizing:border-box;border:1px solid #666;background:#ffffff"></div>
<div style="position:absolute;left:610px;top:270px;width:13px;height:13px;box-sizing:border-box;border:1px solid #666;background:#ffffff"></div>
<div style="position:absolute;left:28px;top:285px;width:18px;height:14px;background:#ffffff"></div>
<div style="position:absolute;left:28px;top:299px;width:18px;height:1px;background:#e8edf2"></div>
<div style="position:absolute;left:47px;top:285px;width:52px;height:14px;background:#ffffff"></div>
<div style="position:absolute;left:100px;top:285px;width:95px;height:14px;background:#f0f0f0"></div>
<div style="position:absolute;left:196px;top:285px;width:205px;height:14px;background:#f0f0f0"></div>
<div style="position:absolute;left:402px;top:285px;width:381px;height:14px;background:#ffffff"></div>
<div style="position:absolute;left:47px;top:299px;width:737px;height:1px;background:#c2c0bd"></div>
<div style="position:absolute;left:-303px;width:400px;text-align:right;top:287px;font:normal 11px/11px 'Liberation Sans', sans-serif;color:#000;white-space:nowrap;">11</div>
<div style="position:absolute;left:102px;top:287px;width:93px;overflow:hidden;font:normal 11px/11px 'Liberation Sans', sans-serif;color:#6d6d6d;white-space:nowrap;letter-spacing:-0.15px">SkidkaCalc</div>
<div style="position:absolute;left:199px;top:287px;width:202px;overflow:hidden;font:normal 11px/11px 'Liberation Sans', sans-serif;color:#9a9a9a;white-space:nowrap;">Скидка 50%</div>
<div style="position:absolute;left:48px;width:400px;text-align:right;top:287px;font:normal 11px/11px 'Liberation Sans', sans-serif;color:#000;white-space:nowrap;">930</div>
<div style="position:absolute;left:477px;top:285px;width:13px;height:13px;box-sizing:border-box;border:1px solid #666;background:#ffffff"></div>
<svg style="position:absolute;left:477px;top:285px" width="13" height="13" viewBox="0 0 13 13"><path d="M3 6.3 L6 9.2 L10.3 3" fill="none" stroke="#000" stroke-width="2.1" stroke-linecap="butt" stroke-linejoin="miter"/></svg>
<div style="position:absolute;left:545px;top:285px;width:13px;height:13px;box-sizing:border-box;border:1px solid #666;background:#ffffff"></div>
<div style="position:absolute;left:610px;top:285px;width:13px;height:13px;box-sizing:border-box;border:1px solid #666;background:#ffffff"></div>
<div style="position:absolute;left:28px;top:300px;width:18px;height:14px;background:#ffffff"></div>
<div style="position:absolute;left:28px;top:314px;width:18px;height:1px;background:#e8edf2"></div>
<div style="position:absolute;left:47px;top:300px;width:52px;height:14px;background:#ffffff"></div>
<div style="position:absolute;left:100px;top:300px;width:95px;height:14px;background:#f0f0f0"></div>
<div style="position:absolute;left:196px;top:300px;width:205px;height:14px;background:#f0f0f0"></div>
<div style="position:absolute;left:402px;top:300px;width:381px;height:14px;background:#ffffff"></div>
<div style="position:absolute;left:47px;top:314px;width:737px;height:1px;background:#c2c0bd"></div>
<div style="position:absolute;left:-303px;width:400px;text-align:right;top:302px;font:normal 11px/11px 'Liberation Sans', sans-serif;color:#000;white-space:nowrap;">12</div>
<div style="position:absolute;left:102px;top:302px;width:93px;overflow:hidden;font:normal 11px/11px 'Liberation Sans', sans-serif;color:#6d6d6d;white-space:nowrap;letter-spacing:-0.15px">Prim</div>
<div style="position:absolute;left:199px;top:302px;width:202px;overflow:hidden;font:normal 11px/11px 'Liberation Sans', sans-serif;color:#9a9a9a;white-space:nowrap;">Примечание</div>
<div style="position:absolute;left:48px;width:400px;text-align:right;top:302px;font:normal 11px/11px 'Liberation Sans', sans-serif;color:#000;white-space:nowrap;">2490</div>
<div style="position:absolute;left:477px;top:300px;width:13px;height:13px;box-sizing:border-box;border:1px solid #666;background:#ffffff"></div>
<svg style="position:absolute;left:477px;top:300px" width="13" height="13" viewBox="0 0 13 13"><path d="M3 6.3 L6 9.2 L10.3 3" fill="none" stroke="#000" stroke-width="2.1" stroke-linecap="butt" stroke-linejoin="miter"/></svg>
<div style="position:absolute;left:545px;top:300px;width:13px;height:13px;box-sizing:border-box;border:1px solid #666;background:#ffffff"></div>
<div style="position:absolute;left:610px;top:300px;width:13px;height:13px;box-sizing:border-box;border:1px solid #666;background:#ffffff"></div>
<div style="position:absolute;left:28px;top:315px;width:18px;height:14px;background:#ffffff"></div>
<div style="position:absolute;left:28px;top:329px;width:18px;height:1px;background:#e8edf2"></div>
<div style="position:absolute;left:47px;top:315px;width:52px;height:14px;background:#ffffff"></div>
<div style="position:absolute;left:100px;top:315px;width:95px;height:14px;background:#f0f0f0"></div>
<div style="position:absolute;left:196px;top:315px;width:205px;height:14px;background:#f0f0f0"></div>
<div style="position:absolute;left:402px;top:315px;width:381px;height:14px;background:#ffffff"></div>
<div style="position:absolute;left:47px;top:329px;width:737px;height:1px;background:#c2c0bd"></div>
<div style="position:absolute;left:-303px;width:400px;text-align:right;top:317px;font:normal 11px/11px 'Liberation Sans', sans-serif;color:#000;white-space:nowrap;">13</div>
<div style="position:absolute;left:102px;top:317px;width:93px;overflow:hidden;font:normal 11px/11px 'Liberation Sans', sans-serif;color:#6d6d6d;white-space:nowrap;letter-spacing:-0.15px">OplataKolUslCalc</div>
<div style="position:absolute;left:199px;top:317px;width:202px;overflow:hidden;font:normal 11px/11px 'Liberation Sans', sans-serif;color:#9a9a9a;white-space:nowrap;">ОПЛАЧЕНО Ед. услуги</div>
<div style="position:absolute;left:48px;width:400px;text-align:right;top:317px;font:normal 11px/11px 'Liberation Sans', sans-serif;color:#000;white-space:nowrap;">1545</div>
<div style="position:absolute;left:477px;top:315px;width:13px;height:13px;box-sizing:border-box;border:1px solid #666;background:#ffffff"></div>
<svg style="position:absolute;left:477px;top:315px" width="13" height="13" viewBox="0 0 13 13"><path d="M3 6.3 L6 9.2 L10.3 3" fill="none" stroke="#000" stroke-width="2.1" stroke-linecap="butt" stroke-linejoin="miter"/></svg>
<div style="position:absolute;left:545px;top:315px;width:13px;height:13px;box-sizing:border-box;border:1px solid #666;background:#ffffff"></div>
<div style="position:absolute;left:610px;top:315px;width:13px;height:13px;box-sizing:border-box;border:1px solid #666;background:#ffffff"></div>
<div style="position:absolute;left:46px;top:118px;width:1px;height:212px;background:#e8edf2"></div>
<div style="position:absolute;left:99px;top:135px;width:1px;height:195px;background:#c2c0bd"></div>
<div style="position:absolute;left:195px;top:135px;width:1px;height:195px;background:#c2c0bd"></div>
<div style="position:absolute;left:401px;top:135px;width:1px;height:195px;background:#c2c0bd"></div>
<div style="position:absolute;left:449px;top:135px;width:1px;height:195px;background:#c2c0bd"></div>
<div style="position:absolute;left:517px;top:135px;width:1px;height:195px;background:#c2c0bd"></div>
<div style="position:absolute;left:585px;top:135px;width:1px;height:195px;background:#c2c0bd"></div>
<div style="position:absolute;left:648px;top:135px;width:1px;height:195px;background:#c2c0bd"></div>
<div style="position:absolute;left:711px;top:135px;width:1px;height:195px;background:#c2c0bd"></div>
<div style="position:absolute;left:783px;top:135px;width:1px;height:195px;background:#c2c0bd"></div>
<svg style="position:absolute;left:35px;top:137px" width="7" height="11" viewBox="0 0 7 11" shape-rendering="crispEdges"><path d="M0 0 L6 5.5 L0 11 Z" fill="#000" shape-rendering="geometricPrecision"/></svg>
<div style="position:absolute;left:53px;top:121px;font:normal 11px/11px 'Liberation Sans', sans-serif;color:#000;white-space:nowrap;letter-spacing:0.3px">Позиция</div>
<div style="position:absolute;left:102px;top:121px;font:normal 11px/11px 'Liberation Sans', sans-serif;color:#000;white-space:nowrap;">Внутреннее имя</div>
<div style="position:absolute;left:198px;top:121px;font:normal 11px/11px 'Liberation Sans', sans-serif;color:#000;white-space:nowrap;">Наименование</div>
<div style="position:absolute;left:48px;width:400px;text-align:right;top:121px;font:normal 11px/11px 'Liberation Sans', sans-serif;color:#000;white-space:nowrap;">Ширина</div>
<div style="position:absolute;left:452px;top:121px;font:normal 11px/11px 'Liberation Sans', sans-serif;color:#000;white-space:nowrap;">Показывать</div>
<div style="position:absolute;left:521px;top:121px;font:normal 11px/11px 'Liberation Sans', sans-serif;color:#000;white-space:nowrap;">Объединять</div>
<div style="position:absolute;left:591px;top:121px;font:normal 11px/11px 'Liberation Sans', sans-serif;color:#000;white-space:nowrap;">Закрепить</div>
<div style="position:absolute;left:651px;top:121px;font:normal 11px/11px 'Liberation Sans', sans-serif;color:#000;white-space:nowrap;">Цвет фона</div>
<div style="position:absolute;left:713px;top:121px;font:normal 11px/11px 'Liberation Sans', sans-serif;color:#000;white-space:nowrap;">Цвет шрифта</div>
<div style="position:absolute;left:26px;top:350px;font:normal 11px/11px 'Liberation Sans', sans-serif;color:#000;white-space:nowrap;">Шрифт:</div>
<div style="position:absolute;left:72px;top:346px;width:188px;height:21px;box-sizing:border-box;border:1px solid #acacac;background:#ffffff"></div>
<div style="position:absolute;left:75px;top:351px;font:normal 11px/11px 'Liberation Sans', sans-serif;color:#000;white-space:nowrap;">MS Sans Serif</div>
<svg style="position:absolute;left:248px;top:354px" width="7" height="6" viewBox="0 0 7 6" shape-rendering="crispEdges"><rect x="0" y="0" width="1" height="1" fill="#505050"/><rect x="6" y="0" width="1" height="1" fill="#505050"/><rect x="0" y="1" width="1" height="1" fill="#505050"/><rect x="1" y="1" width="1" height="1" fill="#505050"/><rect x="5" y="1" width="1" height="1" fill="#505050"/><rect x="6" y="1" width="1" height="1" fill="#505050"/><rect x="0" y="2" width="1" height="1" fill="#505050"/><rect x="1" y="2" width="1" height="1" fill="#505050"/><rect x="2" y="2" width="1" height="1" fill="#505050"/><rect x="4" y="2" width="1" height="1" fill="#505050"/><rect x="5" y="2" width="1" height="1" fill="#505050"/><rect x="6" y="2" width="1" height="1" fill="#505050"/><rect x="1" y="3" width="1" height="1" fill="#505050"/><rect x="2" y="3" width="1" height="1" fill="#505050"/><rect x="3" y="3" width="1" height="1" fill="#505050"/><rect x="4" y="3" width="1" height="1" fill="#505050"/><rect x="5" y="3" width="1" height="1" fill="#505050"/><rect x="2" y="4" width="1" height="1" fill="#505050"/><rect x="3" y="4" width="1" height="1" fill="#505050"/><rect x="4" y="4" width="1" height="1" fill="#505050"/><rect x="3" y="5" width="1" height="1" fill="#505050"/></svg>
<div style="position:absolute;left:268px;top:350px;font:normal 11px/11px 'Liberation Sans', sans-serif;color:#000;white-space:nowrap;">Размер:</div>
<div style="position:absolute;left:320px;top:346px;width:56px;height:21px;box-sizing:border-box;border:1px solid #acacac;background:#ffffff"></div>
<div style="position:absolute;left:324px;top:351px;font:normal 11px/11px 'Liberation Sans', sans-serif;color:#000;white-space:nowrap;">8,25</div>
<svg style="position:absolute;left:364px;top:354px" width="7" height="6" viewBox="0 0 7 6" shape-rendering="crispEdges"><rect x="0" y="0" width="1" height="1" fill="#505050"/><rect x="6" y="0" width="1" height="1" fill="#505050"/><rect x="0" y="1" width="1" height="1" fill="#505050"/><rect x="1" y="1" width="1" height="1" fill="#505050"/><rect x="5" y="1" width="1" height="1" fill="#505050"/><rect x="6" y="1" width="1" height="1" fill="#505050"/><rect x="0" y="2" width="1" height="1" fill="#505050"/><rect x="1" y="2" width="1" height="1" fill="#505050"/><rect x="2" y="2" width="1" height="1" fill="#505050"/><rect x="4" y="2" width="1" height="1" fill="#505050"/><rect x="5" y="2" width="1" height="1" fill="#505050"/><rect x="6" y="2" width="1" height="1" fill="#505050"/><rect x="1" y="3" width="1" height="1" fill="#505050"/><rect x="2" y="3" width="1" height="1" fill="#505050"/><rect x="3" y="3" width="1" height="1" fill="#505050"/><rect x="4" y="3" width="1" height="1" fill="#505050"/><rect x="5" y="3" width="1" height="1" fill="#505050"/><rect x="2" y="4" width="1" height="1" fill="#505050"/><rect x="3" y="4" width="1" height="1" fill="#505050"/><rect x="4" y="4" width="1" height="1" fill="#505050"/><rect x="3" y="5" width="1" height="1" fill="#505050"/></svg>
<div style="position:absolute;left:385px;top:350px;font:normal 11px/11px 'Liberation Sans', sans-serif;color:#000;white-space:nowrap;">Высота строк:</div>
<div style="position:absolute;left:468px;top:346px;width:43px;height:21px;box-sizing:border-box;border:1px solid #acacac;background:#fff"></div>
<div style="position:absolute;left:109px;width:400px;text-align:right;top:351px;font:normal 11px/11px 'Liberation Sans', sans-serif;color:#000;white-space:nowrap;">225</div>
<div style="position:absolute;left:26px;top:378px;width:13px;height:13px;box-sizing:border-box;border:1px solid #333333;background:#ffffff"></div>
<svg style="position:absolute;left:26px;top:378px" width="13" height="13" viewBox="0 0 13 13"><path d="M3 6.3 L6 9.2 L10.3 3" fill="none" stroke="#000" stroke-width="2.1" stroke-linecap="butt" stroke-linejoin="miter"/></svg>
<div style="position:absolute;left:42px;top:380px;font:normal 11px/11px 'Liberation Sans', sans-serif;color:#000;white-space:nowrap;letter-spacing:0.1px">Разрешить контекстное меню для записей</div>
<div style="position:absolute;left:26px;top:394px;width:13px;height:13px;box-sizing:border-box;border:1px solid #333333;background:#ffffff"></div>
<div style="position:absolute;left:42px;top:396px;font:normal 11px/11px 'Liberation Sans', sans-serif;color:#000;white-space:nowrap;letter-spacing:0.1px">Разрешить группировку перетаскиванием полей</div>
<div style="position:absolute;left:26px;top:410px;width:13px;height:13px;box-sizing:border-box;border:1px solid #333333;background:#ffffff"></div>
<svg style="position:absolute;left:26px;top:410px" width="13" height="13" viewBox="0 0 13 13"><path d="M3 6.3 L6 9.2 L10.3 3" fill="none" stroke="#000" stroke-width="2.1" stroke-linecap="butt" stroke-linejoin="miter"/></svg>
<div style="position:absolute;left:42px;top:412px;font:normal 11px/11px 'Liberation Sans', sans-serif;color:#000;white-space:nowrap;letter-spacing:0.1px">Разрешить менять позиции полей перетаскиванием</div>
<div style="position:absolute;left:26px;top:426px;width:13px;height:13px;box-sizing:border-box;border:1px solid #333333;background:#ffffff"></div>
<svg style="position:absolute;left:26px;top:426px" width="13" height="13" viewBox="0 0 13 13"><path d="M3 6.3 L6 9.2 L10.3 3" fill="none" stroke="#000" stroke-width="2.1" stroke-linecap="butt" stroke-linejoin="miter"/></svg>
<div style="position:absolute;left:42px;top:428px;font:normal 11px/11px 'Liberation Sans', sans-serif;color:#000;white-space:nowrap;letter-spacing:0.1px">Разрешить сортировку по клику на заголовках</div>
<div style="position:absolute;left:323px;top:378px;width:13px;height:13px;box-sizing:border-box;border:1px solid #333333;background:#ffffff"></div>
<svg style="position:absolute;left:323px;top:378px" width="13" height="13" viewBox="0 0 13 13"><path d="M3 6.3 L6 9.2 L10.3 3" fill="none" stroke="#000" stroke-width="2.1" stroke-linecap="butt" stroke-linejoin="miter"/></svg>
<div style="position:absolute;left:340px;top:380px;font:normal 11px/11px 'Liberation Sans', sans-serif;color:#000;white-space:nowrap;">Список полей в контекстном меню</div>
<div style="position:absolute;left:323px;top:394px;width:13px;height:13px;box-sizing:border-box;border:1px solid #333333;background:#ffffff"></div>
<svg style="position:absolute;left:323px;top:394px" width="13" height="13" viewBox="0 0 13 13"><path d="M3 6.3 L6 9.2 L10.3 3" fill="none" stroke="#000" stroke-width="2.1" stroke-linecap="butt" stroke-linejoin="miter"/></svg>
<div style="position:absolute;left:340px;top:396px;font:normal 11px/11px 'Liberation Sans', sans-serif;color:#000;white-space:nowrap;">Разрешить менять ширину полей</div>
<div style="position:absolute;left:323px;top:410px;width:13px;height:13px;box-sizing:border-box;border:1px solid #333333;background:#ffffff"></div>
<svg style="position:absolute;left:323px;top:410px" width="13" height="13" viewBox="0 0 13 13"><path d="M3 6.3 L6 9.2 L10.3 3" fill="none" stroke="#000" stroke-width="2.1" stroke-linecap="butt" stroke-linejoin="miter"/></svg>
<div style="position:absolute;left:340px;top:412px;font:normal 11px/11px 'Liberation Sans', sans-serif;color:#000;white-space:nowrap;">Разрешить менять высоту строк</div>
<div style="position:absolute;left:323px;top:426px;width:13px;height:13px;box-sizing:border-box;border:1px solid #333333;background:#ffffff"></div>
<div style="position:absolute;left:340px;top:428px;font:normal 11px/11px 'Liberation Sans', sans-serif;color:#000;white-space:nowrap;">Разрешить выделять группу ячеек</div>
<div style="position:absolute;left:534px;top:346px;width:13px;height:13px;box-sizing:border-box;border:1px solid #333333;background:#ffffff"></div>
<div style="position:absolute;left:550px;top:347px;font:bold 12px/12px 'Liberation Sans', sans-serif;color:#000;white-space:nowrap;">Панель справа</div>
<div style="position:absolute;left:653px;top:346px;width:13px;height:13px;box-sizing:border-box;border:1px solid #333333;background:#ffffff"></div>
<div style="position:absolute;left:669px;top:348px;font:normal 11px/11px 'Liberation Sans', sans-serif;color:#000;white-space:nowrap;">Календарь</div>
<div style="position:absolute;left:729px;top:348px;width:16px;height:16px;box-sizing:border-box;background:#f0f0f0;border-top:1px solid #fff;border-left:1px solid #fff;box-shadow:inset -1px -1px 0 #a0a0a0;border-right:1px solid #696969;border-bottom:1px solid #696969"></div>
<svg style="position:absolute;left:733px;top:352px" width="8" height="8" viewBox="0 0 8 8" shape-rendering="crispEdges"><rect x="2" y="0" width="1" height="1" fill="#8c8c8c"/><rect x="3" y="0" width="1" height="1" fill="#8c8c8c"/><rect x="4" y="0" width="1" height="1" fill="#8c8c8c"/><rect x="5" y="0" width="1" height="1" fill="#8c8c8c"/><rect x="2" y="1" width="1" height="1" fill="#8c8c8c"/><rect x="3" y="1" width="1" height="1" fill="#ffffff"/><rect x="4" y="1" width="1" height="1" fill="#ffffff"/><rect x="5" y="1" width="1" height="1" fill="#8c8c8c"/><rect x="0" y="2" width="1" height="1" fill="#8c8c8c"/><rect x="1" y="2" width="1" height="1" fill="#8c8c8c"/><rect x="2" y="2" width="1" height="1" fill="#8c8c8c"/><rect x="3" y="2" width="1" height="1" fill="#ffffff"/><rect x="4" y="2" width="1" height="1" fill="#ffffff"/><rect x="5" y="2" width="1" height="1" fill="#8c8c8c"/><rect x="6" y="2" width="1" height="1" fill="#8c8c8c"/><rect x="7" y="2" width="1" height="1" fill="#8c8c8c"/><rect x="0" y="3" width="1" height="1" fill="#8c8c8c"/><rect x="1" y="3" width="1" height="1" fill="#ffffff"/><rect x="2" y="3" width="1" height="1" fill="#ffffff"/><rect x="3" y="3" width="1" height="1" fill="#ffffff"/><rect x="4" y="3" width="1" height="1" fill="#ffffff"/><rect x="5" y="3" width="1" height="1" fill="#ffffff"/><rect x="6" y="3" width="1" height="1" fill="#ffffff"/><rect x="7" y="3" width="1" height="1" fill="#8c8c8c"/><rect x="0" y="4" width="1" height="1" fill="#8c8c8c"/><rect x="1" y="4" width="1" height="1" fill="#ffffff"/><rect x="2" y="4" width="1" height="1" fill="#ffffff"/><rect x="3" y="4" width="1" height="1" fill="#ffffff"/><rect x="4" y="4" width="1" height="1" fill="#ffffff"/><rect x="5" y="4" width="1" height="1" fill="#ffffff"/><rect x="6" y="4" width="1" height="1" fill="#ffffff"/><rect x="7" y="4" width="1" height="1" fill="#8c8c8c"/><rect x="0" y="5" width="1" height="1" fill="#8c8c8c"/><rect x="1" y="5" width="1" height="1" fill="#8c8c8c"/><rect x="2" y="5" width="1" height="1" fill="#8c8c8c"/><rect x="3" y="5" width="1" height="1" fill="#ffffff"/><rect x="4" y="5" width="1" height="1" fill="#ffffff"/><rect x="5" y="5" width="1" height="1" fill="#8c8c8c"/><rect x="6" y="5" width="1" height="1" fill="#8c8c8c"/><rect x="7" y="5" width="1" height="1" fill="#8c8c8c"/><rect x="2" y="6" width="1" height="1" fill="#8c8c8c"/><rect x="3" y="6" width="1" height="1" fill="#ffffff"/><rect x="4" y="6" width="1" height="1" fill="#ffffff"/><rect x="5" y="6" width="1" height="1" fill="#8c8c8c"/><rect x="2" y="7" width="1" height="1" fill="#8c8c8c"/><rect x="3" y="7" width="1" height="1" fill="#8c8c8c"/><rect x="4" y="7" width="1" height="1" fill="#8c8c8c"/><rect x="5" y="7" width="1" height="1" fill="#8c8c8c"/></svg>
<div style="position:absolute;left:745px;top:348px;width:16px;height:16px;box-sizing:border-box;background:#f0f0f0;border-top:1px solid #fff;border-left:1px solid #fff;box-shadow:inset -1px -1px 0 #a0a0a0;border-right:1px solid #696969;border-bottom:1px solid #696969"></div>
<svg style="position:absolute;left:745px;top:348px" width="16" height="12" viewBox="0 0 16 12" shape-rendering="crispEdges"><rect x="11" y="3" width="1" height="1" fill="#8c8c8c"/><rect x="12" y="3" width="1" height="1" fill="#8c8c8c"/><rect x="10" y="4" width="1" height="1" fill="#8c8c8c"/><rect x="11" y="4" width="1" height="1" fill="#8c8c8c"/><rect x="12" y="4" width="1" height="1" fill="#8c8c8c"/><rect x="10" y="5" width="1" height="1" fill="#8c8c8c"/><rect x="11" y="5" width="1" height="1" fill="#ffffff"/><rect x="12" y="5" width="1" height="1" fill="#8c8c8c"/><rect x="9" y="6" width="1" height="1" fill="#8c8c8c"/><rect x="10" y="6" width="1" height="1" fill="#ffffff"/><rect x="11" y="6" width="1" height="1" fill="#8c8c8c"/><rect x="9" y="7" width="1" height="1" fill="#8c8c8c"/><rect x="10" y="7" width="1" height="1" fill="#ffffff"/><rect x="11" y="7" width="1" height="1" fill="#8c8c8c"/><rect x="8" y="8" width="1" height="1" fill="#8c8c8c"/><rect x="9" y="8" width="1" height="1" fill="#ffffff"/><rect x="10" y="8" width="1" height="1" fill="#8c8c8c"/><rect x="8" y="9" width="1" height="1" fill="#8c8c8c"/><rect x="9" y="9" width="1" height="1" fill="#8c8c8c"/><rect x="8" y="10" width="1" height="1" fill="#8c8c8c"/><rect x="3" y="11" width="1" height="1" fill="#8c8c8c"/><rect x="5" y="11" width="1" height="1" fill="#8c8c8c"/><rect x="8" y="11" width="1" height="1" fill="#8c8c8c"/></svg>
<div style="position:absolute;left:761px;top:348px;width:16px;height:16px;box-sizing:border-box;background:#f0f0f0;border-top:1px solid #fff;border-left:1px solid #fff;box-shadow:inset -1px -1px 0 #a0a0a0;border-right:1px solid #696969;border-bottom:1px solid #696969"></div>
<svg style="position:absolute;left:765px;top:351px" width="8" height="9" viewBox="0 0 8 9" shape-rendering="crispEdges"><rect x="6" y="0" width="1" height="1" fill="#8c8c8c"/><rect x="7" y="0" width="1" height="1" fill="#8c8c8c"/><rect x="0" y="1" width="1" height="1" fill="#8c8c8c"/><rect x="1" y="1" width="1" height="1" fill="#8c8c8c"/><rect x="5" y="1" width="1" height="1" fill="#8c8c8c"/><rect x="6" y="1" width="1" height="1" fill="#8c8c8c"/><rect x="1" y="2" width="1" height="1" fill="#8c8c8c"/><rect x="2" y="2" width="1" height="1" fill="#8c8c8c"/><rect x="4" y="2" width="1" height="1" fill="#8c8c8c"/><rect x="5" y="2" width="1" height="1" fill="#8c8c8c"/><rect x="2" y="3" width="1" height="1" fill="#8c8c8c"/><rect x="3" y="3" width="1" height="1" fill="#8c8c8c"/><rect x="4" y="3" width="1" height="1" fill="#8c8c8c"/><rect x="2" y="4" width="1" height="1" fill="#8c8c8c"/><rect x="3" y="4" width="1" height="1" fill="#8c8c8c"/><rect x="4" y="4" width="1" height="1" fill="#8c8c8c"/><rect x="1" y="5" width="1" height="1" fill="#8c8c8c"/><rect x="2" y="5" width="1" height="1" fill="#8c8c8c"/><rect x="4" y="5" width="1" height="1" fill="#8c8c8c"/><rect x="5" y="5" width="1" height="1" fill="#8c8c8c"/><rect x="1" y="6" width="1" height="1" fill="#8c8c8c"/><rect x="2" y="6" width="1" height="1" fill="#8c8c8c"/><rect x="5" y="6" width="1" height="1" fill="#8c8c8c"/><rect x="6" y="6" width="1" height="1" fill="#8c8c8c"/><rect x="0" y="7" width="1" height="1" fill="#8c8c8c"/><rect x="1" y="7" width="1" height="1" fill="#8c8c8c"/><rect x="6" y="7" width="1" height="1" fill="#8c8c8c"/><rect x="0" y="8" width="1" height="1" fill="#8c8c8c"/><rect x="7" y="8" width="1" height="1" fill="#8c8c8c"/></svg>
<div style="position:absolute;left:777px;top:348px;width:16px;height:16px;box-sizing:border-box;background:#f0f0f0;border-top:1px solid #fff;border-left:1px solid #fff;box-shadow:inset -1px -1px 0 #a0a0a0;border-right:1px solid #696969;border-bottom:1px solid #696969"></div>
<svg style="position:absolute;left:777px;top:348px" width="16" height="16" viewBox="0 0 16 16" shape-rendering="crispEdges"><path d="M3 8 L7.5 3 L12 8 Z" fill="#8c8c8c" shape-rendering="geometricPrecision"/><rect x="6" y="8" width="3" height="4" fill="#8c8c8c"/></svg>
<div style="position:absolute;left:793px;top:348px;width:16px;height:16px;box-sizing:border-box;background:#f0f0f0;border-top:1px solid #fff;border-left:1px solid #fff;box-shadow:inset -1px -1px 0 #a0a0a0;border-right:1px solid #696969;border-bottom:1px solid #696969"></div>
<svg style="position:absolute;left:793px;top:348px" width="16" height="16" viewBox="0 0 16 16" shape-rendering="crispEdges"><rect x="6" y="3" width="3" height="5" fill="#8c8c8c"/><path d="M3 7.5 L12 7.5 L7.5 12 Z" fill="#8c8c8c" shape-rendering="geometricPrecision"/></svg>
<div style="position:absolute;left:534px;top:368px;width:276px;height:49px;box-sizing:border-box;border:1px solid #828790;background:#fff"></div>
<div style="position:absolute;left:792px;top:369px;width:17px;height:47px;background:#f0f0f0"></div>
<svg style="position:absolute;left:796px;top:376px" width="7" height="6" viewBox="0 0 7 6" shape-rendering="crispEdges"><rect x="3" y="0" width="1" height="1" fill="#505050"/><rect x="2" y="1" width="1" height="1" fill="#505050"/><rect x="3" y="1" width="1" height="1" fill="#505050"/><rect x="4" y="1" width="1" height="1" fill="#505050"/><rect x="1" y="2" width="1" height="1" fill="#505050"/><rect x="2" y="2" width="1" height="1" fill="#505050"/><rect x="3" y="2" width="1" height="1" fill="#505050"/><rect x="4" y="2" width="1" height="1" fill="#505050"/><rect x="5" y="2" width="1" height="1" fill="#505050"/><rect x="0" y="3" width="1" height="1" fill="#505050"/><rect x="1" y="3" width="1" height="1" fill="#505050"/><rect x="2" y="3" width="1" height="1" fill="#505050"/><rect x="4" y="3" width="1" height="1" fill="#505050"/><rect x="5" y="3" width="1" height="1" fill="#505050"/><rect x="6" y="3" width="1" height="1" fill="#505050"/><rect x="0" y="4" width="1" height="1" fill="#505050"/><rect x="1" y="4" width="1" height="1" fill="#505050"/><rect x="5" y="4" width="1" height="1" fill="#505050"/><rect x="6" y="4" width="1" height="1" fill="#505050"/><rect x="0" y="5" width="1" height="1" fill="#505050"/><rect x="6" y="5" width="1" height="1" fill="#505050"/></svg>
<svg style="position:absolute;left:796px;top:404px" width="7" height="6" viewBox="0 0 7 6" shape-rendering="crispEdges"><rect x="0" y="0" width="1" height="1" fill="#505050"/><rect x="6" y="0" width="1" height="1" fill="#505050"/><rect x="0" y="1" width="1" height="1" fill="#505050"/><rect x="1" y="1" width="1" height="1" fill="#505050"/><rect x="5" y="1" width="1" height="1" fill="#505050"/><rect x="6" y="1" width="1" height="1" fill="#505050"/><rect x="0" y="2" width="1" height="1" fill="#505050"/><rect x="1" y="2" width="1" height="1" fill="#505050"/><rect x="2" y="2" width="1" height="1" fill="#505050"/><rect x="4" y="2" width="1" height="1" fill="#505050"/><rect x="5" y="2" width="1" height="1" fill="#505050"/><rect x="6" y="2" width="1" height="1" fill="#505050"/><rect x="1" y="3" width="1" height="1" fill="#505050"/><rect x="2" y="3" width="1" height="1" fill="#505050"/><rect x="3" y="3" width="1" height="1" fill="#505050"/><rect x="4" y="3" width="1" height="1" fill="#505050"/><rect x="5" y="3" width="1" height="1" fill="#505050"/><rect x="2" y="4" width="1" height="1" fill="#505050"/><rect x="3" y="4" width="1" height="1" fill="#505050"/><rect x="4" y="4" width="1" height="1" fill="#505050"/><rect x="3" y="5" width="1" height="1" fill="#505050"/></svg>
<div style="position:absolute;left:551px;top:370px;width:240px;height:15px;background:#3399ff"></div>
<div style="position:absolute;left:538px;top:372px;width:11px;height:11px;box-sizing:border-box;border:1px solid #a8a8a8;background:#f0f0f0"></div>
<div style="position:absolute;left:552px;top:372px;font:normal 11px/11px 'Liberation Sans', sans-serif;color:#6d6d6d;white-space:nowrap;">ID</div>
<div style="position:absolute;left:538px;top:387px;width:11px;height:11px;box-sizing:border-box;border:1px solid #a8a8a8;background:#f0f0f0"></div>
<div style="position:absolute;left:552px;top:387px;font:normal 11px/11px 'Liberation Sans', sans-serif;color:#6d6d6d;white-space:nowrap;">Назначенные услуги - ПЛАТНО</div>
<div style="position:absolute;left:538px;top:402px;width:11px;height:11px;box-sizing:border-box;border:1px solid #a8a8a8;background:#f0f0f0"></div>
<div style="position:absolute;left:552px;top:402px;font:normal 11px/11px 'Liberation Sans', sans-serif;color:#6d6d6d;white-space:nowrap;">Код договора</div>
<div style="position:absolute;left:549px;top:427px;font:normal 11px/11px 'Liberation Sans', sans-serif;color:#000;white-space:nowrap;">Заголовки полей:</div>
<div style="position:absolute;left:653px;top:423px;width:158px;height:21px;box-sizing:border-box;border:1px solid #acacac;background:linear-gradient(#f2f2f2,#e5e5e5)"></div>
<div style="position:absolute;left:657px;top:429px;font:normal 11px/11px 'Liberation Sans', sans-serif;color:#000;white-space:nowrap;">По типу полей</div>
<svg style="position:absolute;left:799px;top:431px" width="7" height="6" viewBox="0 0 7 6" shape-rendering="crispEdges"><rect x="0" y="0" width="1" height="1" fill="#505050"/><rect x="6" y="0" width="1" height="1" fill="#505050"/><rect x="0" y="1" width="1" height="1" fill="#505050"/><rect x="1" y="1" width="1" height="1" fill="#505050"/><rect x="5" y="1" width="1" height="1" fill="#505050"/><rect x="6" y="1" width="1" height="1" fill="#505050"/><rect x="0" y="2" width="1" height="1" fill="#505050"/><rect x="1" y="2" width="1" height="1" fill="#505050"/><rect x="2" y="2" width="1" height="1" fill="#505050"/><rect x="4" y="2" width="1" height="1" fill="#505050"/><rect x="5" y="2" width="1" height="1" fill="#505050"/><rect x="6" y="2" width="1" height="1" fill="#505050"/><rect x="1" y="3" width="1" height="1" fill="#505050"/><rect x="2" y="3" width="1" height="1" fill="#505050"/><rect x="3" y="3" width="1" height="1" fill="#505050"/><rect x="4" y="3" width="1" height="1" fill="#505050"/><rect x="5" y="3" width="1" height="1" fill="#505050"/><rect x="2" y="4" width="1" height="1" fill="#505050"/><rect x="3" y="4" width="1" height="1" fill="#505050"/><rect x="4" y="4" width="1" height="1" fill="#505050"/><rect x="3" y="5" width="1" height="1" fill="#505050"/></svg>
<div style="position:absolute;left:17px;top:466px;width:276px;height:139px;box-sizing:border-box;border:1px solid #ffffff"></div>
<div style="position:absolute;left:16px;top:465px;width:276px;height:139px;box-sizing:border-box;border:1px solid #a0a09a"></div>
<div style="position:absolute;left:22px;top:463px;width:91px;height:5px;background:#f0f0f0"></div>
<div style="position:absolute;left:25px;top:460px;font:bold 12px/12px 'Liberation Sans', sans-serif;color:#000;white-space:nowrap;">Панель слева</div>
<div style="position:absolute;left:26px;top:480px;width:13px;height:13px;box-sizing:border-box;border:1px solid #333333;background:#ffffff"></div>
<div style="position:absolute;left:43px;top:482px;font:normal 11px/11px 'Liberation Sans', sans-serif;color:#000;white-space:nowrap;letter-spacing:0.27px">Фильтры-списки:</div>
<div style="position:absolute;left:216px;top:478px;width:16px;height:16px;box-sizing:border-box;background:#f0f0f0;border-top:1px solid #fff;border-left:1px solid #fff;box-shadow:inset -1px -1px 0 #a0a0a0;border-right:1px solid #696969;border-bottom:1px solid #696969"></div>
<svg style="position:absolute;left:220px;top:482px" width="8" height="8" viewBox="0 0 8 8" shape-rendering="crispEdges"><rect x="2" y="0" width="1" height="1" fill="#8c8c8c"/><rect x="3" y="0" width="1" height="1" fill="#8c8c8c"/><rect x="4" y="0" width="1" height="1" fill="#8c8c8c"/><rect x="5" y="0" width="1" height="1" fill="#8c8c8c"/><rect x="2" y="1" width="1" height="1" fill="#8c8c8c"/><rect x="3" y="1" width="1" height="1" fill="#ffffff"/><rect x="4" y="1" width="1" height="1" fill="#ffffff"/><rect x="5" y="1" width="1" height="1" fill="#8c8c8c"/><rect x="0" y="2" width="1" height="1" fill="#8c8c8c"/><rect x="1" y="2" width="1" height="1" fill="#8c8c8c"/><rect x="2" y="2" width="1" height="1" fill="#8c8c8c"/><rect x="3" y="2" width="1" height="1" fill="#ffffff"/><rect x="4" y="2" width="1" height="1" fill="#ffffff"/><rect x="5" y="2" width="1" height="1" fill="#8c8c8c"/><rect x="6" y="2" width="1" height="1" fill="#8c8c8c"/><rect x="7" y="2" width="1" height="1" fill="#8c8c8c"/><rect x="0" y="3" width="1" height="1" fill="#8c8c8c"/><rect x="1" y="3" width="1" height="1" fill="#ffffff"/><rect x="2" y="3" width="1" height="1" fill="#ffffff"/><rect x="3" y="3" width="1" height="1" fill="#ffffff"/><rect x="4" y="3" width="1" height="1" fill="#ffffff"/><rect x="5" y="3" width="1" height="1" fill="#ffffff"/><rect x="6" y="3" width="1" height="1" fill="#ffffff"/><rect x="7" y="3" width="1" height="1" fill="#8c8c8c"/><rect x="0" y="4" width="1" height="1" fill="#8c8c8c"/><rect x="1" y="4" width="1" height="1" fill="#ffffff"/><rect x="2" y="4" width="1" height="1" fill="#ffffff"/><rect x="3" y="4" width="1" height="1" fill="#ffffff"/><rect x="4" y="4" width="1" height="1" fill="#ffffff"/><rect x="5" y="4" width="1" height="1" fill="#ffffff"/><rect x="6" y="4" width="1" height="1" fill="#ffffff"/><rect x="7" y="4" width="1" height="1" fill="#8c8c8c"/><rect x="0" y="5" width="1" height="1" fill="#8c8c8c"/><rect x="1" y="5" width="1" height="1" fill="#8c8c8c"/><rect x="2" y="5" width="1" height="1" fill="#8c8c8c"/><rect x="3" y="5" width="1" height="1" fill="#ffffff"/><rect x="4" y="5" width="1" height="1" fill="#ffffff"/><rect x="5" y="5" width="1" height="1" fill="#8c8c8c"/><rect x="6" y="5" width="1" height="1" fill="#8c8c8c"/><rect x="7" y="5" width="1" height="1" fill="#8c8c8c"/><rect x="2" y="6" width="1" height="1" fill="#8c8c8c"/><rect x="3" y="6" width="1" height="1" fill="#ffffff"/><rect x="4" y="6" width="1" height="1" fill="#ffffff"/><rect x="5" y="6" width="1" height="1" fill="#8c8c8c"/><rect x="2" y="7" width="1" height="1" fill="#8c8c8c"/><rect x="3" y="7" width="1" height="1" fill="#8c8c8c"/><rect x="4" y="7" width="1" height="1" fill="#8c8c8c"/><rect x="5" y="7" width="1" height="1" fill="#8c8c8c"/></svg>
<div style="position:absolute;left:232px;top:478px;width:16px;height:16px;box-sizing:border-box;background:#f0f0f0;border-top:1px solid #fff;border-left:1px solid #fff;box-shadow:inset -1px -1px 0 #a0a0a0;border-right:1px solid #696969;border-bottom:1px solid #696969"></div>
<svg style="position:absolute;left:236px;top:481px" width="8" height="9" viewBox="0 0 8 9" shape-rendering="crispEdges"><rect x="6" y="0" width="1" height="1" fill="#8c8c8c"/><rect x="7" y="0" width="1" height="1" fill="#8c8c8c"/><rect x="0" y="1" width="1" height="1" fill="#8c8c8c"/><rect x="1" y="1" width="1" height="1" fill="#8c8c8c"/><rect x="5" y="1" width="1" height="1" fill="#8c8c8c"/><rect x="6" y="1" width="1" height="1" fill="#8c8c8c"/><rect x="1" y="2" width="1" height="1" fill="#8c8c8c"/><rect x="2" y="2" width="1" height="1" fill="#8c8c8c"/><rect x="4" y="2" width="1" height="1" fill="#8c8c8c"/><rect x="5" y="2" width="1" height="1" fill="#8c8c8c"/><rect x="2" y="3" width="1" height="1" fill="#8c8c8c"/><rect x="3" y="3" width="1" height="1" fill="#8c8c8c"/><rect x="4" y="3" width="1" height="1" fill="#8c8c8c"/><rect x="2" y="4" width="1" height="1" fill="#8c8c8c"/><rect x="3" y="4" width="1" height="1" fill="#8c8c8c"/><rect x="4" y="4" width="1" height="1" fill="#8c8c8c"/><rect x="1" y="5" width="1" height="1" fill="#8c8c8c"/><rect x="2" y="5" width="1" height="1" fill="#8c8c8c"/><rect x="4" y="5" width="1" height="1" fill="#8c8c8c"/><rect x="5" y="5" width="1" height="1" fill="#8c8c8c"/><rect x="1" y="6" width="1" height="1" fill="#8c8c8c"/><rect x="2" y="6" width="1" height="1" fill="#8c8c8c"/><rect x="5" y="6" width="1" height="1" fill="#8c8c8c"/><rect x="6" y="6" width="1" height="1" fill="#8c8c8c"/><rect x="0" y="7" width="1" height="1" fill="#8c8c8c"/><rect x="1" y="7" width="1" height="1" fill="#8c8c8c"/><rect x="6" y="7" width="1" height="1" fill="#8c8c8c"/><rect x="0" y="8" width="1" height="1" fill="#8c8c8c"/><rect x="7" y="8" width="1" height="1" fill="#8c8c8c"/></svg>
<div style="position:absolute;left:248px;top:478px;width:16px;height:16px;box-sizing:border-box;background:#f0f0f0;border-top:1px solid #fff;border-left:1px solid #fff;box-shadow:inset -1px -1px 0 #a0a0a0;border-right:1px solid #696969;border-bottom:1px solid #696969"></div>
<svg style="position:absolute;left:248px;top:478px" width="16" height="16" viewBox="0 0 16 16" shape-rendering="crispEdges"><path d="M3 8 L7.5 3 L12 8 Z" fill="#8c8c8c" shape-rendering="geometricPrecision"/><rect x="6" y="8" width="3" height="4" fill="#8c8c8c"/></svg>
<div style="position:absolute;left:264px;top:478px;width:16px;height:16px;box-sizing:border-box;background:#f0f0f0;border-top:1px solid #fff;border-left:1px solid #fff;box-shadow:inset -1px -1px 0 #a0a0a0;border-right:1px solid #696969;border-bottom:1px solid #696969"></div>
<svg style="position:absolute;left:264px;top:478px" width="16" height="16" viewBox="0 0 16 16" shape-rendering="crispEdges"><rect x="6" y="3" width="3" height="5" fill="#8c8c8c"/><path d="M3 7.5 L12 7.5 L7.5 12 Z" fill="#8c8c8c" shape-rendering="geometricPrecision"/></svg>
<div style="position:absolute;left:24px;top:497px;width:257px;height:95px;box-sizing:border-box;border:1px solid #828790;background:#fff"></div>
<div style="position:absolute;left:302px;top:466px;width:519px;height:139px;box-sizing:border-box;border:1px solid #ffffff"></div>
<div style="position:absolute;left:301px;top:465px;width:519px;height:139px;box-sizing:border-box;border:1px solid #a0a09a"></div>
<div style="position:absolute;left:307px;top:463px;width:99px;height:5px;background:#f0f0f0"></div>
<div style="position:absolute;left:310px;top:460px;font:bold 12px/12px 'Liberation Sans', sans-serif;color:#000;white-space:nowrap;">Правила полей</div>
<div style="position:absolute;left:310px;top:480px;font:normal 11px/11px 'Liberation Sans', sans-serif;color:#000;white-space:nowrap;">Видимость, доступность и другие свойства полей по условию:</div>
<div style="position:absolute;left:746px;top:475px;width:16px;height:16px;box-sizing:border-box;background:#f0f0f0;border-top:1px solid #fff;border-left:1px solid #fff;box-shadow:inset -1px -1px 0 #a0a0a0;border-right:1px solid #696969;border-bottom:1px solid #696969"></div>
<svg style="position:absolute;left:750px;top:479px" width="8" height="8" viewBox="0 0 8 8" shape-rendering="crispEdges"><rect x="2" y="0" width="1" height="1" fill="#008000"/><rect x="3" y="0" width="1" height="1" fill="#008000"/><rect x="4" y="0" width="1" height="1" fill="#008000"/><rect x="5" y="0" width="1" height="1" fill="#008000"/><rect x="2" y="1" width="1" height="1" fill="#008000"/><rect x="3" y="1" width="1" height="1" fill="#80ff80"/><rect x="4" y="1" width="1" height="1" fill="#80ff80"/><rect x="5" y="1" width="1" height="1" fill="#008000"/><rect x="0" y="2" width="1" height="1" fill="#008000"/><rect x="1" y="2" width="1" height="1" fill="#008000"/><rect x="2" y="2" width="1" height="1" fill="#008000"/><rect x="3" y="2" width="1" height="1" fill="#80ff80"/><rect x="4" y="2" width="1" height="1" fill="#80ff80"/><rect x="5" y="2" width="1" height="1" fill="#008000"/><rect x="6" y="2" width="1" height="1" fill="#008000"/><rect x="7" y="2" width="1" height="1" fill="#008000"/><rect x="0" y="3" width="1" height="1" fill="#008000"/><rect x="1" y="3" width="1" height="1" fill="#80ff80"/><rect x="2" y="3" width="1" height="1" fill="#80ff80"/><rect x="3" y="3" width="1" height="1" fill="#80ff80"/><rect x="4" y="3" width="1" height="1" fill="#80ff80"/><rect x="5" y="3" width="1" height="1" fill="#80ff80"/><rect x="6" y="3" width="1" height="1" fill="#80ff80"/><rect x="7" y="3" width="1" height="1" fill="#008000"/><rect x="0" y="4" width="1" height="1" fill="#008000"/><rect x="1" y="4" width="1" height="1" fill="#80ff80"/><rect x="2" y="4" width="1" height="1" fill="#80ff80"/><rect x="3" y="4" width="1" height="1" fill="#80ff80"/><rect x="4" y="4" width="1" height="1" fill="#80ff80"/><rect x="5" y="4" width="1" height="1" fill="#80ff80"/><rect x="6" y="4" width="1" height="1" fill="#80ff80"/><rect x="7" y="4" width="1" height="1" fill="#008000"/><rect x="0" y="5" width="1" height="1" fill="#008000"/><rect x="1" y="5" width="1" height="1" fill="#008000"/><rect x="2" y="5" width="1" height="1" fill="#008000"/><rect x="3" y="5" width="1" height="1" fill="#80ff80"/><rect x="4" y="5" width="1" height="1" fill="#80ff80"/><rect x="5" y="5" width="1" height="1" fill="#008000"/><rect x="6" y="5" width="1" height="1" fill="#008000"/><rect x="7" y="5" width="1" height="1" fill="#008000"/><rect x="2" y="6" width="1" height="1" fill="#008000"/><rect x="3" y="6" width="1" height="1" fill="#80ff80"/><rect x="4" y="6" width="1" height="1" fill="#80ff80"/><rect x="5" y="6" width="1" height="1" fill="#008000"/><rect x="2" y="7" width="1" height="1" fill="#008000"/><rect x="3" y="7" width="1" height="1" fill="#008000"/><rect x="4" y="7" width="1" height="1" fill="#008000"/><rect x="5" y="7" width="1" height="1" fill="#008000"/></svg>
<div style="position:absolute;left:762px;top:475px;width:16px;height:16px;box-sizing:border-box;background:#f0f0f0;border-top:1px solid #fff;border-left:1px solid #fff;box-shadow:inset -1px -1px 0 #a0a0a0;border-right:1px solid #696969;border-bottom:1px solid #696969"></div>
<svg style="position:absolute;left:766px;top:478px" width="8" height="9" viewBox="0 0 8 9" shape-rendering="crispEdges"><rect x="6" y="0" width="1" height="1" fill="#800000"/><rect x="7" y="0" width="1" height="1" fill="#800000"/><rect x="0" y="1" width="1" height="1" fill="#800000"/><rect x="1" y="1" width="1" height="1" fill="#800000"/><rect x="5" y="1" width="1" height="1" fill="#800000"/><rect x="6" y="1" width="1" height="1" fill="#800000"/><rect x="1" y="2" width="1" height="1" fill="#800000"/><rect x="2" y="2" width="1" height="1" fill="#800000"/><rect x="4" y="2" width="1" height="1" fill="#800000"/><rect x="5" y="2" width="1" height="1" fill="#800000"/><rect x="2" y="3" width="1" height="1" fill="#800000"/><rect x="3" y="3" width="1" height="1" fill="#800000"/><rect x="4" y="3" width="1" height="1" fill="#800000"/><rect x="2" y="4" width="1" height="1" fill="#800000"/><rect x="3" y="4" width="1" height="1" fill="#800000"/><rect x="4" y="4" width="1" height="1" fill="#800000"/><rect x="1" y="5" width="1" height="1" fill="#800000"/><rect x="2" y="5" width="1" height="1" fill="#800000"/><rect x="4" y="5" width="1" height="1" fill="#800000"/><rect x="5" y="5" width="1" height="1" fill="#800000"/><rect x="1" y="6" width="1" height="1" fill="#800000"/><rect x="2" y="6" width="1" height="1" fill="#800000"/><rect x="5" y="6" width="1" height="1" fill="#800000"/><rect x="6" y="6" width="1" height="1" fill="#800000"/><rect x="0" y="7" width="1" height="1" fill="#800000"/><rect x="1" y="7" width="1" height="1" fill="#800000"/><rect x="6" y="7" width="1" height="1" fill="#800000"/><rect x="0" y="8" width="1" height="1" fill="#800000"/><rect x="7" y="8" width="1" height="1" fill="#800000"/></svg>
<div style="position:absolute;left:778px;top:475px;width:16px;height:16px;box-sizing:border-box;background:#f0f0f0;border-top:1px solid #fff;border-left:1px solid #fff;box-shadow:inset -1px -1px 0 #a0a0a0;border-right:1px solid #696969;border-bottom:1px solid #696969"></div>
<svg style="position:absolute;left:778px;top:475px" width="16" height="16" viewBox="0 0 16 16" shape-rendering="crispEdges"><path d="M3 8 L7.5 3 L12 8 Z" fill="#000" shape-rendering="geometricPrecision"/><rect x="6" y="8" width="3" height="4" fill="#000"/></svg>
<div style="position:absolute;left:794px;top:475px;width:16px;height:16px;box-sizing:border-box;background:#f0f0f0;border-top:1px solid #fff;border-left:1px solid #fff;box-shadow:inset -1px -1px 0 #a0a0a0;border-right:1px solid #696969;border-bottom:1px solid #696969"></div>
<svg style="position:absolute;left:794px;top:475px" width="16" height="16" viewBox="0 0 16 16" shape-rendering="crispEdges"><rect x="6" y="3" width="3" height="5" fill="#000"/><path d="M3 7.5 L12 7.5 L7.5 12 Z" fill="#000" shape-rendering="geometricPrecision"/></svg>
<div style="position:absolute;left:311px;top:495px;width:499px;height:98px;box-sizing:border-box;background:#f0f0f0;border-top:1px solid #a0a0a0;border-left:1px solid #a0a0a0;border-right:1px solid #fff;border-bottom:1px solid #fff"></div>
<div style="position:absolute;left:312px;top:496px;width:497px;height:96px;box-sizing:border-box;border-top:1px solid #696969;border-left:1px solid #696969;border-right:1px solid #e3e3e3;border-bottom:1px solid #e3e3e3"></div>
<div style="position:absolute;left:313px;top:497px;width:495px;height:31px;background:#fff"></div>
<div style="position:absolute;left:313px;top:512px;width:495px;height:1px;background:#e8edf2"></div>
<div style="position:absolute;left:313px;top:527px;width:18px;height:1px;background:#e8edf2"></div>
<div style="position:absolute;left:332px;top:527px;width:476px;height:1px;background:#c2c0bd"></div>
<div style="position:absolute;left:331px;top:497px;width:1px;height:31px;background:#e8edf2"></div>
<div style="position:absolute;left:464px;top:513px;width:1px;height:15px;background:#c2c0bd"></div>
<div style="position:absolute;left:651px;top:513px;width:1px;height:15px;background:#c2c0bd"></div>
<div style="position:absolute;left:727px;top:513px;width:1px;height:15px;background:#c2c0bd"></div>
<div style="position:absolute;left:335px;top:499px;font:normal 11px/11px 'Liberation Sans', sans-serif;color:#000;white-space:nowrap;">Условное выражение</div>
<div style="position:absolute;left:467px;top:499px;font:normal 11px/11px 'Liberation Sans', sans-serif;color:#000;white-space:nowrap;">Поля</div>
<div style="position:absolute;left:653px;top:499px;font:normal 11px/11px 'Liberation Sans', sans-serif;color:#000;white-space:nowrap;">Свойство</div>
<div style="position:absolute;left:731px;top:499px;font:normal 11px/11px 'Liberation Sans', sans-serif;color:#000;white-space:nowrap;">Значение</div>
<svg style="position:absolute;left:317px;top:516px" width="10" height="10" viewBox="0 0 10 10" shape-rendering="crispEdges"><path d="M5 0.5 V9.5 M0.8 2.5 L9.2 7.5 M9.2 2.5 L0.8 7.5" stroke="#000" stroke-width="1.3" shape-rendering="geometricPrecision"/></svg>
<div style="position:absolute;left:586px;top:616px;width:74px;height:21px;box-sizing:border-box;border:1px solid #3399ff;background:linear-gradient(#f0f0f0,#e5e5e5)"></div>
<div style="position:absolute;left:586px;top:622px;width:74px;text-align:center;font:normal 11px/11px 'Liberation Sans', sans-serif;color:#000;white-space:nowrap">OK</div>
<div style="position:absolute;left:666px;top:616px;width:74px;height:21px;box-sizing:border-box;border:1px solid #acacac;background:linear-gradient(#f0f0f0,#e5e5e5)"></div>
<div style="position:absolute;left:666px;top:622px;width:74px;text-align:center;font:normal 11px/11px 'Liberation Sans', sans-serif;color:#000;white-space:nowrap">Отмена</div>
<div style="position:absolute;left:746px;top:616px;width:74px;height:21px;box-sizing:border-box;border:1px solid #acacac;background:linear-gradient(#f0f0f0,#e5e5e5)"></div>
<div style="position:absolute;left:746px;top:622px;width:74px;text-align:center;font:normal 11px/11px 'Liberation Sans', sans-serif;color:#000;white-space:nowrap">Применить</div>
<svg style="position:absolute;left:816px;top:637px" width="12" height="12" viewBox="0 0 12 12" shape-rendering="crispEdges"><path d="M11 4 L4 11 M11 7 L7 11" stroke="#909090" stroke-width="1" shape-rendering="geometricPrecision"/></svg>
</body></html>
